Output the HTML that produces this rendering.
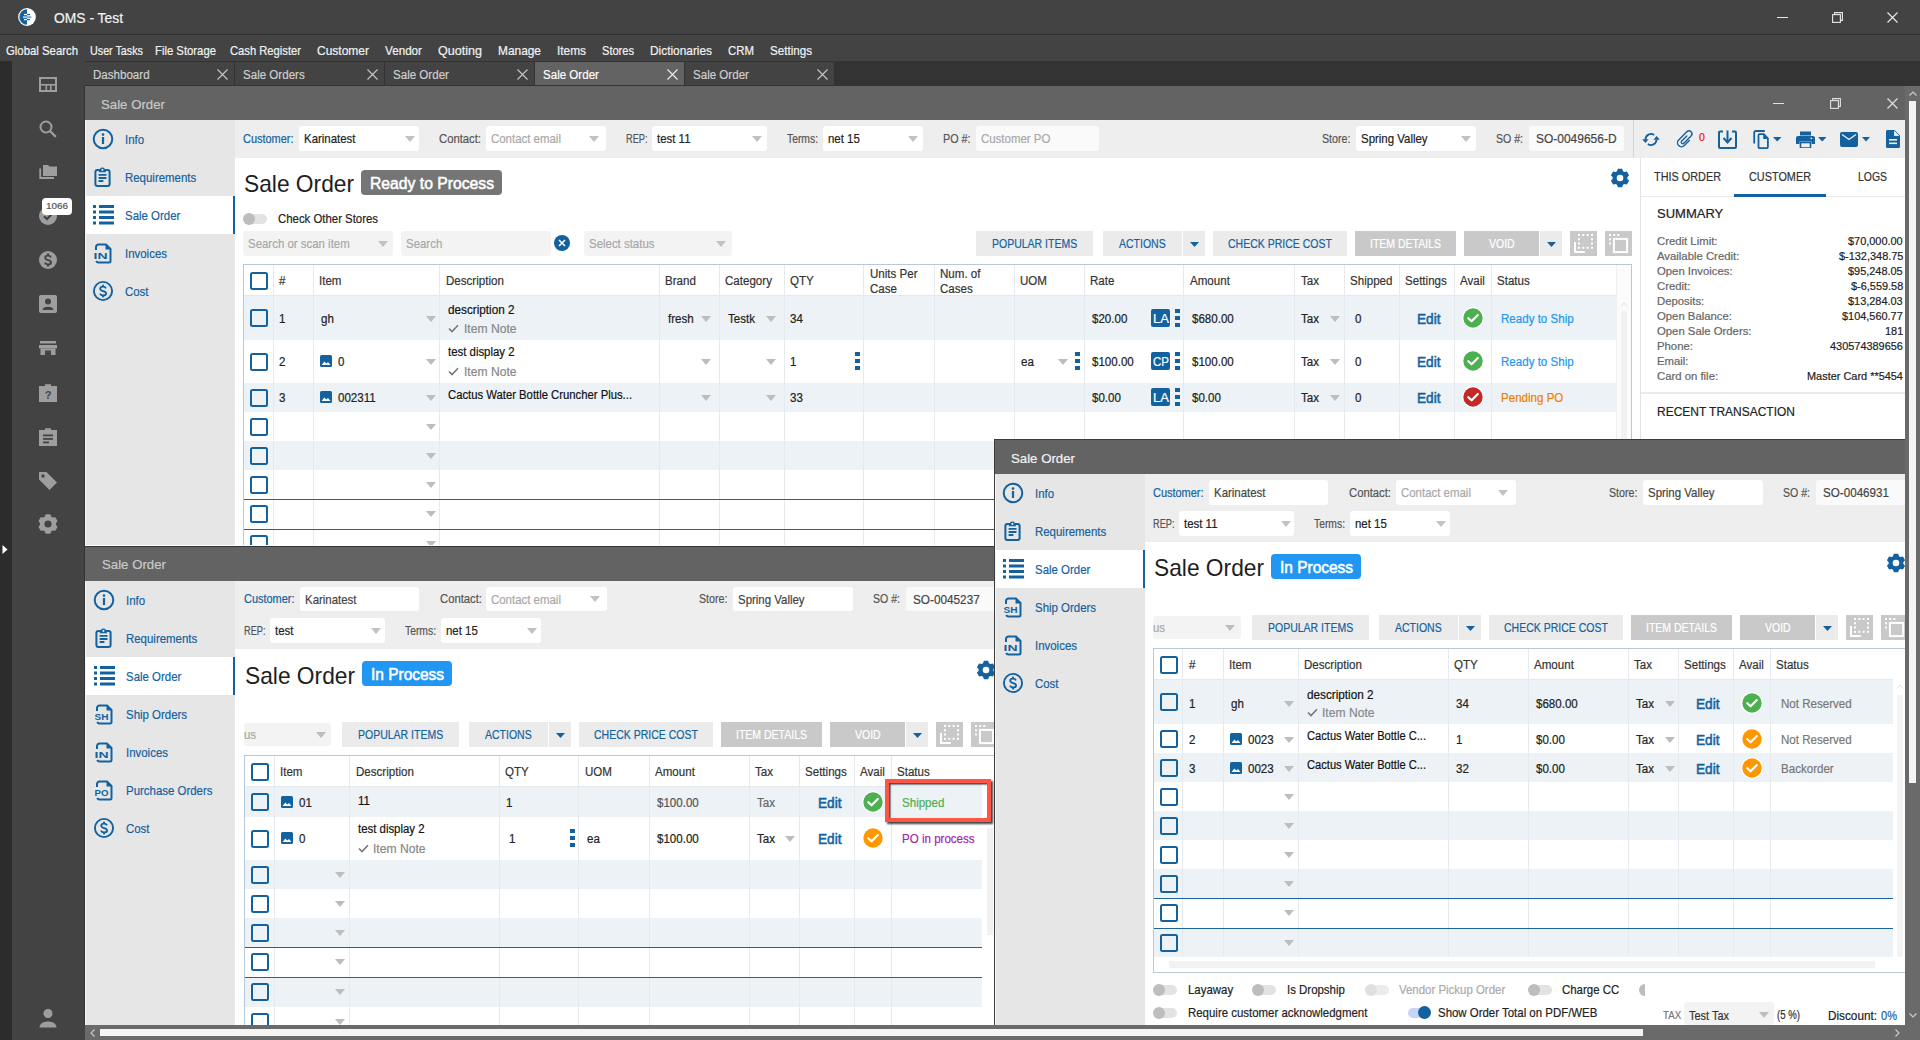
<!DOCTYPE html><html><head><meta charset="utf-8"><style>
html,body{margin:0;padding:0;width:1920px;height:1040px;overflow:hidden;background:#434343;}
body{position:relative;font-family:"Liberation Sans",sans-serif;}
div,svg{position:absolute;box-sizing:border-box;}
.t{white-space:nowrap;line-height:1;transform-origin:0 0;-webkit-text-stroke:0.2px currentColor;}
</style></head><body>
<div style="left:0px;top:0px;width:1920px;height:34px;background:#434343;"></div>
<div style="left:0px;top:34px;width:1920px;height:1px;background:#2f2f2f;"></div>
<div style="left:0px;top:35px;width:1920px;height:26px;background:#434343;"></div>
<svg style="left:18px;top:8px;" width="19" height="19" viewBox="0 0 19 19"><circle cx="9" cy="9" r="8.9" fill="#fff"/><path d="M9 1.3 A7.7 7.7 0 0 0 9 16.7 Z" fill="#13629f"/><rect x="6" y="5.9" width="3" height="1.3" fill="#fff"/><rect x="9" y="5.9" width="3" height="1.3" fill="#13629f"/><rect x="5" y="8.4" width="4" height="1.4" fill="#d5e3ef"/><rect x="9" y="8.4" width="4.3" height="1.4" fill="#5b93c2"/><rect x="6" y="10.9" width="3" height="1.3" fill="#fff"/><rect x="9" y="10.9" width="3" height="1.3" fill="#13629f"/></svg>
<div class="t" style="left:54.0px;top:11.2px;font-size:14px;color:#f2f2f2;transform:scaleX(0.989);">OMS - Test</div>
<div style="left:1777px;top:17px;width:11px;height:1.2px;background:#e8e8e8;"></div>
<svg style="left:1832px;top:12px;" width="11" height="11" viewBox="0 0 11 11"><rect x="0.6" y="2.6" width="7.8" height="7.8" stroke="#e8e8e8" stroke-width="1.1" fill="none"/><path d="M2.6 2.6V0.6H10.4V8.4H8.4" stroke="#e8e8e8" stroke-width="1.1" fill="none"/></svg>
<svg style="left:1887px;top:12px;" width="11" height="11" viewBox="0 0 11 11"><path d="M0.5 0.5L10.5 10.5M10.5 0.5L0.5 10.5" stroke="#e8e8e8" stroke-width="1.2"/></svg>
<div class="t" style="left:6.0px;top:43.8px;font-size:13px;color:#f2f2f2;transform:scaleX(0.874);">Global Search</div>
<div class="t" style="left:90.0px;top:43.8px;font-size:13px;color:#f2f2f2;transform:scaleX(0.827);">User Tasks</div>
<div class="t" style="left:155.0px;top:43.8px;font-size:13px;color:#f2f2f2;transform:scaleX(0.870);">File Storage</div>
<div class="t" style="left:230.0px;top:43.8px;font-size:13px;color:#f2f2f2;transform:scaleX(0.862);">Cash Register</div>
<div class="t" style="left:317.0px;top:43.8px;font-size:13px;color:#f2f2f2;transform:scaleX(0.923);">Customer</div>
<div class="t" style="left:385.0px;top:43.8px;font-size:13px;color:#f2f2f2;transform:scaleX(0.898);">Vendor</div>
<div class="t" style="left:438.0px;top:43.8px;font-size:13px;color:#f2f2f2;transform:scaleX(0.966);">Quoting</div>
<div class="t" style="left:498.0px;top:43.8px;font-size:13px;color:#f2f2f2;transform:scaleX(0.915);">Manage</div>
<div class="t" style="left:557.0px;top:43.8px;font-size:13px;color:#f2f2f2;transform:scaleX(0.912);">Items</div>
<div class="t" style="left:602.0px;top:43.8px;font-size:13px;color:#f2f2f2;transform:scaleX(0.852);">Stores</div>
<div class="t" style="left:650.0px;top:43.8px;font-size:13px;color:#f2f2f2;transform:scaleX(0.913);">Dictionaries</div>
<div class="t" style="left:728.0px;top:43.8px;font-size:13px;color:#f2f2f2;transform:scaleX(0.878);">CRM</div>
<div class="t" style="left:770.0px;top:43.8px;font-size:13px;color:#f2f2f2;transform:scaleX(0.894);">Settings</div>
<div style="left:0px;top:61px;width:12px;height:979px;background:#2c2c2c;"></div>
<div style="left:12px;top:61px;width:73px;height:979px;background:#434343;"></div>
<svg style="left:39px;top:77px;" width="18" height="15" viewBox="0 0 18 15"><rect x="1" y="1" width="16" height="13" stroke="#9e9e9e" stroke-width="2" fill="none"/><rect x="1" y="7" width="16" height="1.6" fill="#9e9e9e"/><rect x="6.5" y="8" width="1.6" height="6" fill="#9e9e9e"/><rect x="11" y="8" width="1.6" height="6" fill="#9e9e9e"/></svg>
<svg style="left:39px;top:120px;" width="18" height="18" viewBox="0 0 18 18"><circle cx="7" cy="7" r="5.5" stroke="#9e9e9e" stroke-width="2" fill="none"/><path d="M11 11 L16.8 16.8" stroke="#9e9e9e" stroke-width="2.4"/></svg>
<svg style="left:39px;top:164px;" width="18" height="15" viewBox="0 0 18 15"><path d="M4 3V1H9L10.5 2.5H18V12H4Z" fill="#9e9e9e"/><path d="M1.2 4.5V14H15" stroke="#9e9e9e" stroke-width="1.8" fill="none"/></svg>
<svg style="left:39px;top:207px;" width="18" height="18" viewBox="0 0 18 18"><circle cx="9" cy="9" r="9" fill="#9e9e9e"/><path d="M5 9.3 L8 12 L13.3 6.5" stroke="#434343" stroke-width="2.2" fill="none"/></svg>
<svg style="left:39px;top:251px;" width="18" height="18" viewBox="0 0 18 18"><circle cx="9" cy="9" r="9" fill="#9e9e9e"/><g transform="translate(-2 -2)"><path d="M14 8.4 C13.4 7.1 12.3 6.6 11 6.6 C9.4 6.6 8.2 7.5 8.2 8.8 C8.2 10.3 9.7 10.7 11 11.1 C12.6 11.6 14.1 12 14.1 13.5 C14.1 14.8 12.8 15.5 11.1 15.5 C9.6 15.5 8.5 14.8 7.9 13.6" stroke="#434343" stroke-width="1.9" fill="none"/><rect x="10.1" y="4.4" width="1.8" height="2.6" fill="#434343"/><rect x="10.1" y="15" width="1.8" height="2.6" fill="#434343"/></g></svg>
<svg style="left:39px;top:295px;" width="18" height="18" viewBox="0 0 18 18"><rect x="0" y="0" width="18" height="18" rx="2" fill="#9e9e9e"/><circle cx="9" cy="6.5" r="3" fill="#434343"/><path d="M3.5 15 C3.5 10.5 14.5 10.5 14.5 15Z" fill="#434343"/></svg>
<svg style="left:39px;top:340px;" width="18" height="16" viewBox="0 0 18 16"><path d="M1 1H17V3.5H1Z" fill="#9e9e9e"/><path d="M0 5H18V8.5H0Z" fill="#9e9e9e"/><path d="M1.5 8.5H16.5V15H12V10.5H6V15H1.5Z" fill="#9e9e9e"/></svg>
<svg style="left:39px;top:383px;" width="18" height="19" viewBox="0 0 18 19"><path d="M0 3H6V1.2H12V3H18V19H0Z" fill="#9e9e9e"/><text x="9" y="16" text-anchor="middle" font-family="Liberation Sans" font-weight="bold" font-size="11" fill="#434343">?</text></svg>
<svg style="left:39px;top:427px;" width="18" height="19" viewBox="0 0 18 19"><path d="M0 3H6V1.2H12V3H18V19H0Z" fill="#9e9e9e"/><rect x="4" y="7.5" width="10" height="1.8" fill="#434343"/><rect x="4" y="11" width="10" height="1.8" fill="#434343"/><rect x="4" y="14.5" width="6" height="1.8" fill="#434343"/></svg>
<svg style="left:38px;top:471px;" width="20" height="20" viewBox="0 0 20 20"><path d="M1 4 V1.5 A0.5 0.5 0 0 1 1.5 1 H8.5 L19 11.5 L11.5 19 L1 8.5Z" fill="#9e9e9e"/><circle cx="5" cy="5" r="1.7" fill="#434343"/></svg>
<svg style="left:38px;top:514px;" width="20" height="20" viewBox="0 0 20 20"><path d="M6.62 2.75 L7.75 0.26 L12.25 0.26 L13.38 2.75 L14.08 2.93 L14.59 3.45 L17.31 3.18 L19.56 7.08 L17.97 9.30 L18.16 10.00 L17.97 10.70 L19.56 12.92 L17.31 16.82 L14.59 16.55 L14.08 17.07 L13.38 17.25 L12.25 19.74 L7.75 19.74 L6.62 17.25 L5.92 17.07 L5.41 16.55 L2.69 16.82 L0.44 12.92 L2.03 10.70 L1.84 10.00 L2.03 9.30 L0.44 7.08 L2.69 3.18 L5.41 3.45 L5.92 2.93Z M13.60 10 A3.6 3.6 0 1 0 6.40 10 A3.6 3.6 0 1 0 13.60 10Z" fill="#9e9e9e" fill-rule="evenodd"/></svg>
<svg style="left:38px;top:1008px;" width="20" height="20" viewBox="0 0 20 20"><circle cx="10" cy="5.5" r="4.5" fill="#9e9e9e"/><path d="M1.5 19.5 C1.5 11.5 18.5 11.5 18.5 19.5Z" fill="#9e9e9e"/></svg>
<div style="left:42px;top:198px;width:30px;height:17px;background:#fff;border-radius:4px;"></div>
<div class="t" style="left:46.0px;top:200.8px;font-size:9.5px;color:#555;transform:scaleX(1.041);">1066</div>
<svg style="left:2px;top:545px;" width="6" height="9" viewBox="0 0 6 9"><path d="M0.5 0 L5.5 4.5 L0.5 9Z" fill="#fff"/></svg>
<div style="left:85px;top:61px;width:1835px;height:25px;background:#333333;"></div>
<div style="left:85px;top:62px;width:149px;height:23px;background:#434343;"></div>
<div class="t" style="left:93.0px;top:69.4px;font-size:12.5px;color:#cfcfcf;transform:scaleX(0.925);">Dashboard</div>
<svg style="left:217px;top:69px;" width="11" height="11" viewBox="0 0 11 11"><path d="M0.5 0.5L10.5 10.5M10.5 0.5L0.5 10.5" stroke="#c8c8c8" stroke-width="1.1"/></svg>
<div style="left:235px;top:62px;width:149px;height:23px;background:#434343;"></div>
<div class="t" style="left:243.0px;top:69.4px;font-size:12.5px;color:#cfcfcf;transform:scaleX(0.925);">Sale Orders</div>
<svg style="left:367px;top:69px;" width="11" height="11" viewBox="0 0 11 11"><path d="M0.5 0.5L10.5 10.5M10.5 0.5L0.5 10.5" stroke="#c8c8c8" stroke-width="1.1"/></svg>
<div style="left:385px;top:62px;width:149px;height:23px;background:#434343;"></div>
<div class="t" style="left:393.0px;top:69.4px;font-size:12.5px;color:#cfcfcf;transform:scaleX(0.925);">Sale Order</div>
<svg style="left:517px;top:69px;" width="11" height="11" viewBox="0 0 11 11"><path d="M0.5 0.5L10.5 10.5M10.5 0.5L0.5 10.5" stroke="#c8c8c8" stroke-width="1.1"/></svg>
<div style="left:535px;top:62px;width:149px;height:23px;background:#636363;"></div>
<div class="t" style="left:543.0px;top:69.4px;font-size:12.5px;color:#ffffff;transform:scaleX(0.925);">Sale Order</div>
<svg style="left:667px;top:69px;" width="11" height="11" viewBox="0 0 11 11"><path d="M0.5 0.5L10.5 10.5M10.5 0.5L0.5 10.5" stroke="#f0f0f0" stroke-width="1.1"/></svg>
<div style="left:685px;top:62px;width:149px;height:23px;background:#434343;"></div>
<div class="t" style="left:693.0px;top:69.4px;font-size:12.5px;color:#cfcfcf;transform:scaleX(0.925);">Sale Order</div>
<svg style="left:817px;top:69px;" width="11" height="11" viewBox="0 0 11 11"><path d="M0.5 0.5L10.5 10.5M10.5 0.5L0.5 10.5" stroke="#c8c8c8" stroke-width="1.1"/></svg>
<div style="left:85px;top:86px;width:1820px;height:34px;background:#636363;"></div>
<div class="t" style="left:101.0px;top:97.7px;font-size:13.5px;color:#c9c9c9;transform:scaleX(0.980);">Sale Order</div>
<div style="left:1773px;top:103px;width:11px;height:1.2px;background:#e0e0e0;"></div>
<svg style="left:1830px;top:98px;" width="11" height="11" viewBox="0 0 11 11"><rect x="0.6" y="2.6" width="7.8" height="7.8" stroke="#e0e0e0" stroke-width="1.1" fill="none"/><path d="M2.6 2.6V0.6H10.4V8.4H8.4" stroke="#e0e0e0" stroke-width="1.1" fill="none"/></svg>
<svg style="left:1887px;top:98px;" width="11" height="11" viewBox="0 0 11 11"><path d="M0.5 0.5L10.5 10.5M10.5 0.5L0.5 10.5" stroke="#e0e0e0" stroke-width="1.2"/></svg>
<div style="left:85px;top:120px;width:150px;height:426px;background:#e6e6e6;"></div>
<svg style="left:92px;top:128px;" width="22" height="22" viewBox="0 0 22 22"><circle cx="11" cy="11" r="9.3" stroke="#13629f" stroke-width="2" fill="none"/><rect x="9.9" y="9" width="2.2" height="7" fill="#13629f"/><circle cx="11" cy="6.6" r="1.3" fill="#13629f"/></svg>
<div class="t" style="left:125.0px;top:132.8px;font-size:13px;color:#13629f;transform:scaleX(0.880);">Info</div>
<svg style="left:93px;top:166px;" width="20" height="22" viewBox="0 0 20 22"><rect x="2.4" y="3.9" width="14.2" height="16" rx="2" stroke="#13629f" stroke-width="2" fill="none"/><path d="M5.6 6.2 L6.9 2.9 A2.9 2.9 0 0 1 11.9 2.9 L13.2 6.2Z" fill="#13629f"/><circle cx="9.4" cy="3.9" r="1.05" fill="#e6e6e6"/><rect x="5.4" y="8" width="8.3" height="1.8" rx="0.9" fill="#13629f"/><rect x="5.4" y="11.1" width="8.3" height="1.8" rx="0.9" fill="#13629f"/><rect x="5.4" y="14.1" width="5.2" height="1.8" rx="0.9" fill="#13629f"/></svg>
<div class="t" style="left:125.0px;top:170.8px;font-size:13px;color:#13629f;transform:scaleX(0.880);">Requirements</div>
<div style="left:85px;top:196px;width:150px;height:38px;background:#ffffff;"></div>
<div style="left:233px;top:196px;width:2px;height:38px;background:#13629f;"></div>
<svg style="left:93px;top:205px;" width="21" height="20" viewBox="0 0 21 20"><rect x="0" y="0" width="3" height="3" fill="#13629f"/><rect x="6" y="0" width="15" height="3" fill="#13629f"/><rect x="0" y="5.5" width="3" height="3" fill="#13629f"/><rect x="6" y="5.5" width="15" height="3" fill="#13629f"/><rect x="0" y="11" width="3" height="3" fill="#13629f"/><rect x="6" y="11" width="15" height="3" fill="#13629f"/><rect x="0" y="16.5" width="3" height="3" fill="#13629f"/><rect x="6" y="16.5" width="15" height="3" fill="#13629f"/></svg>
<div class="t" style="left:125.0px;top:208.8px;font-size:13px;color:#13629f;transform:scaleX(0.880);">Sale Order</div>
<svg style="left:94px;top:243px;" width="19" height="21" viewBox="0 0 19 21"><path d="M2 7V4A2.5 2.5 0 0 1 4.5 1.5H12L16.5 6V18A1.5 1.5 0 0 1 15 19.5H4.5A2.5 2.5 0 0 1 2.2 18" stroke="#13629f" stroke-width="2" fill="none"/><path d="M11.5 1.5V6.5H16.5Z" fill="#13629f"/><text x="-0.5" y="16.2" font-family="Liberation Sans" font-weight="bold" font-size="9.8" fill="#13629f" textLength="14" lengthAdjust="spacingAndGlyphs">IN</text></svg>
<div class="t" style="left:125.0px;top:246.8px;font-size:13px;color:#13629f;transform:scaleX(0.880);">Invoices</div>
<svg style="left:92px;top:280px;" width="22" height="22" viewBox="0 0 22 22"><circle cx="11" cy="11" r="9.1" stroke="#13629f" stroke-width="1.9" fill="none"/><path d="M14 8.4 C13.4 7.1 12.3 6.6 11 6.6 C9.4 6.6 8.2 7.5 8.2 8.8 C8.2 10.3 9.7 10.7 11 11.1 C12.6 11.6 14.1 12 14.1 13.5 C14.1 14.8 12.8 15.5 11.1 15.5 C9.6 15.5 8.5 14.8 7.9 13.6" stroke="#13629f" stroke-width="1.8" fill="none" stroke-linecap="butt"/><rect x="10.1" y="4.6" width="1.8" height="2.4" fill="#13629f"/><rect x="10.1" y="15" width="1.8" height="2.4" fill="#13629f"/></svg>
<div class="t" style="left:125.0px;top:284.8px;font-size:13px;color:#13629f;transform:scaleX(0.880);">Cost</div>
<div style="left:85px;top:120px;width:1px;height:426px;background:#f5f5f5;"></div>
<div style="left:235px;top:120px;width:1670px;height:38px;background:#eeeeee;"></div>
<div style="left:1633px;top:120px;width:1px;height:38px;background:#d6d6d6;"></div>
<div class="t" style="left:243.0px;top:133.4px;font-size:12px;color:#13629f;transform:scaleX(0.912);">Customer:</div>
<div style="left:299px;top:126px;width:120px;height:25px;background:#ffffff;border-radius:3px;"></div>
<div class="t" style="left:304.0px;top:132.1px;font-size:13px;color:#222;transform:scaleX(0.880);">Karinatest</div>
<svg style="left:405px;top:135.5px;" width="10" height="6" viewBox="0 0 10 6"><path d="M0 0H10L5.0 6Z" fill="#c2c2c2"/></svg>
<div class="t" style="left:439.0px;top:133.4px;font-size:12px;color:#555;transform:scaleX(0.940);">Contact:</div>
<div style="left:486px;top:126px;width:120px;height:25px;background:#ffffff;border-radius:3px;"></div>
<div class="t" style="left:491.0px;top:132.1px;font-size:13px;color:#a8a8a8;transform:scaleX(0.880);">Contact email</div>
<svg style="left:589px;top:135.5px;" width="10" height="6" viewBox="0 0 10 6"><path d="M0 0H10L5.0 6Z" fill="#c2c2c2"/></svg>
<div class="t" style="left:626.0px;top:133.4px;font-size:12px;color:#555;transform:scaleX(0.768);">REP:</div>
<div style="left:652px;top:126px;width:115px;height:25px;background:#ffffff;border-radius:3px;"></div>
<div class="t" style="left:657.0px;top:132.1px;font-size:13px;color:#222;transform:scaleX(0.880);">test 11</div>
<svg style="left:752px;top:135.5px;" width="10" height="6" viewBox="0 0 10 6"><path d="M0 0H10L5.0 6Z" fill="#c2c2c2"/></svg>
<div class="t" style="left:787.0px;top:133.4px;font-size:12px;color:#555;transform:scaleX(0.861);">Terms:</div>
<div style="left:823px;top:126px;width:100px;height:25px;background:#ffffff;border-radius:3px;"></div>
<div class="t" style="left:828.0px;top:132.1px;font-size:13px;color:#222;transform:scaleX(0.880);">net 15</div>
<svg style="left:908px;top:135.5px;" width="10" height="6" viewBox="0 0 10 6"><path d="M0 0H10L5.0 6Z" fill="#c2c2c2"/></svg>
<div class="t" style="left:943.0px;top:133.4px;font-size:12px;color:#555;transform:scaleX(0.896);">PO #:</div>
<div style="left:976px;top:126px;width:123px;height:25px;background:#fafafa;border-radius:3px;"></div>
<div class="t" style="left:981.0px;top:132.1px;font-size:13px;color:#a8a8a8;transform:scaleX(0.880);">Customer PO</div>
<div class="t" style="left:1322.0px;top:133.4px;font-size:12px;color:#555;transform:scaleX(0.890);">Store:</div>
<div style="left:1356px;top:126px;width:120px;height:25px;background:#ffffff;border-radius:3px;"></div>
<div class="t" style="left:1361.0px;top:132.1px;font-size:13px;color:#222;transform:scaleX(0.880);">Spring Valley</div>
<svg style="left:1461px;top:135.5px;" width="10" height="6" viewBox="0 0 10 6"><path d="M0 0H10L5.0 6Z" fill="#c2c2c2"/></svg>
<div class="t" style="left:1496.0px;top:133.4px;font-size:12px;color:#555;transform:scaleX(0.880);">SO #:</div>
<div style="left:1529px;top:126px;width:95px;height:25px;background:#fafafa;border-radius:3px;"></div>
<div class="t" style="left:1536.0px;top:132.1px;font-size:13px;color:#444;transform:scaleX(0.921);">SO-0049656-D</div>
<svg style="left:1640px;top:130px;" width="22" height="18" viewBox="0 0 22 18"><path d="M14.15 5.0 A5.5 5.5 0 0 0 5.5 9.5" stroke="#13629f" stroke-width="1.8" fill="none"/><path d="M2.2 9.2 L8.6 9.2 L5.4 13 Z" fill="#13629f"/><path d="M7.85 14.0 A5.5 5.5 0 0 0 16.5 9.5" stroke="#13629f" stroke-width="1.8" fill="none"/><path d="M13.4 9.8 L19.8 9.8 L16.6 6.0 Z" fill="#13629f"/></svg>
<svg style="left:1675px;top:128px;" width="20" height="22" viewBox="0 0 20 22"><g transform="translate(10.2 11.0) rotate(45) translate(-4 -9.25)"><path d="M8 7.5 L8 14.5 A4 4 0 0 1 0 14.5 L0 3 A3 3 0 0 1 6 3 L6 13.2 A1.5 1.5 0 0 1 3 13.2 L3 6" stroke="#13629f" stroke-width="1.4" fill="none" stroke-linecap="round"/></g></svg>
<div class="t" style="left:1699.0px;top:131.6px;font-size:10.5px;color:#f01010;">0</div>
<svg style="left:1718px;top:130px;" width="19" height="19" viewBox="0 0 19 19"><path d="M5 1.5H2A1 1 0 0 0 1 2.5V17A1 1 0 0 0 2 18H17A1 1 0 0 0 18 17V2.5A1 1 0 0 0 17 1.5H14" stroke="#13629f" stroke-width="2" fill="none"/><path d="M9.5 0.5V11" stroke="#13629f" stroke-width="2"/><path d="M5.5 8 L9.5 12.5 L13.5 8" stroke="#13629f" stroke-width="2" fill="none"/></svg>
<svg style="left:1753px;top:130px;" width="16" height="19" viewBox="0 0 16 19"><path d="M1.2 13.5V2.6A1.6 1.6 0 0 1 2.8 1H11.8" stroke="#13629f" stroke-width="1.8" fill="none"/><path d="M5.5 5.2A1 1 0 0 1 6.5 4.2H10.8L14.9 8.3V17A1.2 1.2 0 0 1 13.7 18.2H6.7A1.2 1.2 0 0 1 5.5 17Z" stroke="#13629f" stroke-width="1.8" fill="none"/><path d="M10.2 4.5V9H14.6Z" fill="#13629f"/></svg>
<svg style="left:1773px;top:137px;" width="8.5" height="4.5" viewBox="0 0 8.5 4.5"><path d="M0 0H8.5L4.25 4.5Z" fill="#13629f"/></svg>
<svg style="left:1796px;top:131px;" width="19" height="17" viewBox="0 0 19 17"><rect x="4" y="0.5" width="11" height="4" fill="#13629f"/><path d="M0 7A2 2 0 0 1 2 5H17A2 2 0 0 1 19 7V13H15.5V10.5H3.5V13H0Z" fill="#13629f"/><rect x="4.5" y="11.5" width="10" height="5.5" stroke="#13629f" stroke-width="1.6" fill="#eee"/><circle cx="15.3" cy="7.3" r="0.9" fill="#eee"/></svg>
<svg style="left:1817.5px;top:137px;" width="8.5" height="4.5" viewBox="0 0 8.5 4.5"><path d="M0 0H8.5L4.25 4.5Z" fill="#13629f"/></svg>
<svg style="left:1840px;top:132px;" width="18" height="15" viewBox="0 0 18 15"><rect x="0" y="0" width="18" height="15" rx="2" fill="#13629f"/><path d="M2 2.5 L9 7.5 L16 2.5" stroke="#eeeeee" stroke-width="1.4" fill="none"/></svg>
<svg style="left:1862px;top:137px;" width="8" height="4.5" viewBox="0 0 8 4.5"><path d="M0 0H8L4.0 4.5Z" fill="#13629f"/></svg>
<svg style="left:1886px;top:130px;" width="14" height="18" viewBox="0 0 14 18"><path d="M1.5 0H8.5L14 5.5V16.5A1.5 1.5 0 0 1 12.5 18H1.5A1.5 1.5 0 0 1 0 16.5V1.5A1.5 1.5 0 0 1 1.5 0Z" fill="#13629f"/><path d="M8 1 V5.8 H13" fill="#eee"/><path d="M8.3 0.8 L13.2 5.7 H8.3Z" fill="#eeeeee"/><rect x="3" y="9" width="8" height="1.6" fill="#eee"/><rect x="3" y="12.5" width="8" height="1.6" fill="#eee"/></svg>
<div style="left:235px;top:158px;width:1405px;height:388px;background:#ffffff;"></div>
<div class="t" style="left:244.0px;top:171.9px;font-size:24px;color:#1e1e1e;transform:scaleX(0.948);-webkit-text-stroke:0;">Sale Order</div>
<div style="left:361px;top:170px;width:141px;height:25px;background:#757575;border-radius:4px;"></div>
<div class="t" style="left:369.5px;top:175.6px;font-size:16px;color:#ffffff;transform:scaleX(0.982);-webkit-text-stroke:0.55px currentColor;">Ready to Process</div>
<svg style="left:1610px;top:168px;" width="20" height="20" viewBox="0 0 20 20"><path d="M6.91 3.38 L7.86 0.74 L12.14 0.74 L13.09 3.38 L13.72 3.55 L14.19 4.02 L16.95 3.52 L19.08 7.22 L17.27 9.36 L17.45 10.00 L17.27 10.64 L19.08 12.78 L16.95 16.48 L14.19 15.98 L13.72 16.45 L13.09 16.62 L12.14 19.26 L7.86 19.26 L6.91 16.62 L6.28 16.45 L5.81 15.98 L3.05 16.48 L0.92 12.78 L2.73 10.64 L2.55 10.00 L2.73 9.36 L0.92 7.22 L3.05 3.52 L5.81 4.02 L6.28 3.55Z M13.30 10.0 A3.3000000000000003 3.3000000000000003 0 1 0 6.70 10.0 A3.3000000000000003 3.3000000000000003 0 1 0 13.30 10.0Z" fill="#13629f" fill-rule="evenodd"/></svg>
<div style="left:245px;top:213.5px;width:22px;height:10px;background:#e3e3e3;border-radius:5px;"></div>
<div style="left:243px;top:212.5px;width:12px;height:12px;border-radius:50%;background:#bdbdbd;"></div>
<div class="t" style="left:277.5px;top:212.3px;font-size:13px;color:#222;transform:scaleX(0.876);">Check Other Stores</div>
<div style="left:243px;top:231px;width:150px;height:25px;background:#f3f3f3;border-radius:3px;"></div>
<div class="t" style="left:248.0px;top:237.1px;font-size:13px;color:#a8a8a8;transform:scaleX(0.880);">Search or scan item</div>
<svg style="left:378px;top:240.5px;" width="10" height="6" viewBox="0 0 10 6"><path d="M0 0H10L5.0 6Z" fill="#c2c2c2"/></svg>
<div style="left:401px;top:231px;width:150px;height:25px;background:#f3f3f3;border-radius:3px;"></div>
<div class="t" style="left:406.0px;top:237.1px;font-size:13px;color:#a8a8a8;transform:scaleX(0.880);">Search</div>
<svg style="left:554px;top:235px;" width="16" height="16" viewBox="0 0 16 16"><circle cx="8" cy="8" r="8" fill="#13629f"/><path d="M5 5L11 11M11 5L5 11" stroke="#fff" stroke-width="1.6"/></svg>
<div style="left:584px;top:231px;width:148px;height:25px;background:#f3f3f3;border-radius:3px;"></div>
<div class="t" style="left:589.0px;top:237.1px;font-size:13px;color:#a8a8a8;transform:scaleX(0.880);">Select status</div>
<svg style="left:716px;top:240.5px;" width="10" height="6" viewBox="0 0 10 6"><path d="M0 0H10L5.0 6Z" fill="#c2c2c2"/></svg>
<div style="left:976px;top:231px;width:117px;height:25px;background:#ebebeb;"></div>
<div class="t" style="left:991.9px;top:237.9px;font-size:12.5px;color:#13629f;transform:scaleX(0.840);">POPULAR ITEMS</div>
<div style="left:1103px;top:231px;width:79px;height:25px;background:#ebebeb;"></div>
<div class="t" style="left:1119.2px;top:237.9px;font-size:12.5px;color:#13629f;transform:scaleX(0.840);">ACTIONS</div>
<div style="left:1183px;top:231px;width:22px;height:25px;background:#ebebeb;"></div>
<svg style="left:1189.5px;top:241.5px;" width="9" height="5" viewBox="0 0 9 5"><path d="M0 0H9L4.5 5Z" fill="#13629f"/></svg>
<div style="left:1213px;top:231px;width:134px;height:25px;background:#ebebeb;"></div>
<div class="t" style="left:1228.1px;top:237.9px;font-size:12.5px;color:#13629f;transform:scaleX(0.840);">CHECK PRICE COST</div>
<div style="left:1355px;top:231px;width:101px;height:25px;background:#c9c9c9;"></div>
<div class="t" style="left:1370.0px;top:237.9px;font-size:12.5px;color:#ffffff;transform:scaleX(0.840);">ITEM DETAILS</div>
<div style="left:1464px;top:231px;width:75px;height:25px;background:#c9c9c9;"></div>
<div class="t" style="left:1488.7px;top:237.9px;font-size:12.5px;color:#ffffff;transform:scaleX(0.840);">VOID</div>
<div style="left:1540px;top:231px;width:22px;height:25px;background:#ebebeb;"></div>
<svg style="left:1546.5px;top:241.5px;" width="9" height="5" viewBox="0 0 9 5"><path d="M0 0H9L4.5 5Z" fill="#13629f"/></svg>
<div style="left:1570px;top:231px;width:27px;height:25px;background:#c9c9c9;"></div>
<div style="left:1605px;top:231px;width:27px;height:25px;background:#c9c9c9;"></div>
<svg style="left:1570px;top:231px;" width="27" height="25" viewBox="0 0 27 25"><rect x="8" y="3" width="2" height="2" fill="#fff"/><rect x="8" y="15.8" width="2" height="2" fill="#fff"/><rect x="12.3" y="3" width="2" height="2" fill="#fff"/><rect x="12.3" y="15.8" width="2" height="2" fill="#fff"/><rect x="16.6" y="3" width="2" height="2" fill="#fff"/><rect x="16.6" y="15.8" width="2" height="2" fill="#fff"/><rect x="21" y="3" width="2" height="2" fill="#fff"/><rect x="21" y="15.8" width="2" height="2" fill="#fff"/><rect x="8" y="7.3" width="2" height="2" fill="#fff"/><rect x="21" y="7.3" width="2" height="2" fill="#fff"/><rect x="8" y="11.5" width="2" height="2" fill="#fff"/><rect x="21" y="11.5" width="2" height="2" fill="#fff"/><rect x="4" y="11" width="2" height="11" fill="#fff"/><rect x="4" y="20" width="10.8" height="2" fill="#fff"/></svg>
<svg style="left:1605px;top:231px;" width="27" height="25" viewBox="0 0 27 25"><rect x="4" y="3" width="2" height="2" fill="#fff"/><rect x="8.2" y="3" width="2" height="2" fill="#fff"/><rect x="12.3" y="3" width="2" height="2" fill="#fff"/><rect x="4" y="7.3" width="2" height="2" fill="#fff"/><rect x="4" y="11.5" width="2" height="2" fill="#fff"/><rect x="8.9" y="7.9" width="13.2" height="13.2" stroke="#fff" stroke-width="2" fill="none"/></svg>
<div style="left:1640px;top:158px;width:265px;height:388px;background:#ffffff;"></div>
<div style="left:1640px;top:158px;width:1px;height:388px;background:#e3e3e3;"></div>
<div class="t" style="left:1654.0px;top:170.3px;font-size:13px;color:#333;transform:scaleX(0.836);">THIS ORDER</div>
<div class="t" style="left:1749.0px;top:170.3px;font-size:13px;color:#333;transform:scaleX(0.836);">CUSTOMER</div>
<div class="t" style="left:1858.0px;top:170.3px;font-size:13px;color:#333;transform:scaleX(0.803);">LOGS</div>
<div style="left:1641px;top:196px;width:264px;height:1px;background:#e8e8e8;"></div>
<div style="left:1734px;top:194px;width:92px;height:2.5px;background:#13629f;"></div>
<div class="t" style="left:1657.0px;top:207.3px;font-size:13px;color:#222;">SUMMARY</div>
<div class="t" style="left:1657.0px;top:236.1px;font-size:11px;color:#666;transform:scaleX(1.030);">Credit Limit:</div>
<div class="t" style="left:1848.3px;top:236.0px;font-size:11.5px;color:#222;transform:scaleX(0.950);">$70,000.00</div>
<div class="t" style="left:1657.0px;top:251.1px;font-size:11px;color:#666;transform:scaleX(1.030);">Available Credit:</div>
<div class="t" style="left:1838.6px;top:251.0px;font-size:11.5px;color:#222;transform:scaleX(0.950);">$-132,348.75</div>
<div class="t" style="left:1657.0px;top:266.1px;font-size:11px;color:#666;transform:scaleX(1.030);">Open Invoices:</div>
<div class="t" style="left:1848.3px;top:266.0px;font-size:11.5px;color:#222;transform:scaleX(0.950);">$95,248.05</div>
<div class="t" style="left:1657.0px;top:281.1px;font-size:11px;color:#666;transform:scaleX(1.030);">Credit:</div>
<div class="t" style="left:1850.8px;top:281.0px;font-size:11.5px;color:#222;transform:scaleX(0.950);">$-6,559.58</div>
<div class="t" style="left:1657.0px;top:296.1px;font-size:11px;color:#666;transform:scaleX(1.030);">Deposits:</div>
<div class="t" style="left:1848.3px;top:296.0px;font-size:11.5px;color:#222;transform:scaleX(0.950);">$13,284.03</div>
<div class="t" style="left:1657.0px;top:311.1px;font-size:11px;color:#666;transform:scaleX(1.030);">Open Balance:</div>
<div class="t" style="left:1842.2px;top:311.0px;font-size:11.5px;color:#222;transform:scaleX(0.950);">$104,560.77</div>
<div class="t" style="left:1657.0px;top:326.1px;font-size:11px;color:#666;transform:scaleX(1.030);">Open Sale Orders:</div>
<div class="t" style="left:1884.8px;top:326.0px;font-size:11.5px;color:#222;transform:scaleX(0.950);">181</div>
<div class="t" style="left:1657.0px;top:341.1px;font-size:11px;color:#666;transform:scaleX(1.030);">Phone:</div>
<div class="t" style="left:1830.1px;top:341.0px;font-size:11.5px;color:#222;transform:scaleX(0.950);">430574389656</div>
<div class="t" style="left:1657.0px;top:356.1px;font-size:11px;color:#666;transform:scaleX(1.030);">Email:</div>
<div class="t" style="left:1657.0px;top:371.1px;font-size:11px;color:#666;transform:scaleX(1.030);">Card on file:</div>
<div class="t" style="left:1807.1px;top:371.0px;font-size:11.5px;color:#222;transform:scaleX(0.950);">Master Card **5454</div>
<div style="left:1641px;top:392px;width:264px;height:2px;background:#ebebeb;"></div>
<div class="t" style="left:1657.0px;top:405.3px;font-size:13px;color:#222;transform:scaleX(0.921);">RECENT TRANSACTION</div>
<div style="left:243px;top:264px;width:1389px;height:282px;background:#ffffff;"></div>
<div style="left:243px;top:295px;width:1373px;height:45px;background:#ecf2f6;"></div>
<div style="left:243px;top:383px;width:1373px;height:29px;background:#ecf2f6;"></div>
<div style="left:243px;top:441px;width:1373px;height:29px;background:#ecf2f6;"></div>
<div style="left:243px;top:559px;width:1373px;height:30px;background:#ecf2f6;"></div>
<div style="left:243px;top:295px;width:1373px;height:1px;background:#e6e9ec;"></div>
<div style="left:272.7px;top:264px;width:1.0px;height:282px;background:#e6eaee;"></div>
<div style="left:313px;top:264px;width:1px;height:282px;background:#e6eaee;"></div>
<div style="left:439.3px;top:264px;width:1.0px;height:282px;background:#e6eaee;"></div>
<div style="left:658.6px;top:264px;width:1.0px;height:282px;background:#e6eaee;"></div>
<div style="left:718.5px;top:264px;width:1.0px;height:282px;background:#e6eaee;"></div>
<div style="left:783.9px;top:264px;width:1.0px;height:282px;background:#e6eaee;"></div>
<div style="left:863.4px;top:264px;width:1.0px;height:282px;background:#e6eaee;"></div>
<div style="left:933.6px;top:264px;width:1.0px;height:282px;background:#e6eaee;"></div>
<div style="left:1013.8px;top:264px;width:1.0px;height:282px;background:#e6eaee;"></div>
<div style="left:1083.6px;top:264px;width:1.0px;height:282px;background:#e6eaee;"></div>
<div style="left:1183.4px;top:264px;width:1.0px;height:282px;background:#e6eaee;"></div>
<div style="left:1293.8px;top:264px;width:1.0px;height:282px;background:#e6eaee;"></div>
<div style="left:1344.2px;top:264px;width:1.0px;height:282px;background:#e6eaee;"></div>
<div style="left:1398.9px;top:264px;width:1.0px;height:282px;background:#e6eaee;"></div>
<div style="left:1454.4px;top:264px;width:1.0px;height:282px;background:#e6eaee;"></div>
<div style="left:1491px;top:264px;width:1px;height:282px;background:#e6eaee;"></div>
<div style="left:243px;top:499px;width:1373px;height:1.3000000000000114px;background:#1d63a0;"></div>
<div style="left:243px;top:529px;width:1373px;height:1.2999999999999545px;background:#1d63a0;"></div>
<div style="left:243px;top:264px;width:1389px;height:1px;background:#b7c8d8;"></div>
<div style="left:243px;top:264px;width:1px;height:282px;background:#b7c8d8;"></div>
<div class="t" style="left:279.0px;top:275.4px;font-size:12.5px;color:#333;transform:scaleX(0.925);">#</div>
<div class="t" style="left:319.0px;top:275.4px;font-size:12.5px;color:#333;transform:scaleX(0.925);">Item</div>
<div class="t" style="left:446.0px;top:275.4px;font-size:12.5px;color:#333;transform:scaleX(0.925);">Description</div>
<div class="t" style="left:665.0px;top:275.4px;font-size:12.5px;color:#333;transform:scaleX(0.925);">Brand</div>
<div class="t" style="left:725.0px;top:275.4px;font-size:12.5px;color:#333;transform:scaleX(0.925);">Category</div>
<div class="t" style="left:790.0px;top:275.4px;font-size:12.5px;color:#333;transform:scaleX(0.925);">QTY</div>
<div class="t" style="left:870.0px;top:268.4px;font-size:12.5px;color:#333;transform:scaleX(0.925);">Units Per</div>
<div class="t" style="left:870.0px;top:283.4px;font-size:12.5px;color:#333;transform:scaleX(0.925);">Case</div>
<div class="t" style="left:940.0px;top:268.4px;font-size:12.5px;color:#333;transform:scaleX(0.925);">Num. of</div>
<div class="t" style="left:940.0px;top:283.4px;font-size:12.5px;color:#333;transform:scaleX(0.925);">Cases</div>
<div class="t" style="left:1020.0px;top:275.4px;font-size:12.5px;color:#333;transform:scaleX(0.925);">UOM</div>
<div class="t" style="left:1090.0px;top:275.4px;font-size:12.5px;color:#333;transform:scaleX(0.925);">Rate</div>
<div class="t" style="left:1190.0px;top:275.4px;font-size:12.5px;color:#333;transform:scaleX(0.925);">Amount</div>
<div class="t" style="left:1301.0px;top:275.4px;font-size:12.5px;color:#333;transform:scaleX(0.925);">Tax</div>
<div class="t" style="left:1350.0px;top:275.4px;font-size:12.5px;color:#333;transform:scaleX(0.925);">Shipped</div>
<div class="t" style="left:1405.0px;top:275.4px;font-size:12.5px;color:#333;transform:scaleX(0.925);">Settings</div>
<div class="t" style="left:1460.0px;top:275.4px;font-size:12.5px;color:#333;transform:scaleX(0.925);">Avail</div>
<div class="t" style="left:1497.0px;top:275.4px;font-size:12.5px;color:#333;transform:scaleX(0.925);">Status</div>
<div style="left:1616px;top:265px;width:15px;height:281px;background:#fbfbfb;"></div>
<div style="left:1616px;top:265px;width:1px;height:281px;background:#efefef;"></div>
<div style="left:1621px;top:311px;width:6px;height:235px;background:#f1f1f1;"></div>
<div style="left:1631px;top:264px;width:1px;height:282px;background:#b7c8d8;"></div>
<svg style="left:1620px;top:302px;" width="8" height="5" viewBox="0 0 8 5"><path d="M0.5 4.5L4 1L7.5 4.5" stroke="#e0e0e0" stroke-width="1" fill="none"/></svg>
<div style="left:250px;top:308.5px;width:18px;height:18px;border:2px solid #13629f;border-radius:2.5px;"></div>
<div style="left:250px;top:352.5px;width:18px;height:18px;border:2px solid #13629f;border-radius:2.5px;"></div>
<div style="left:250px;top:388.5px;width:18px;height:18px;border:2px solid #13629f;border-radius:2.5px;"></div>
<div style="left:250px;top:417.5px;width:18px;height:18px;border:2px solid #13629f;border-radius:2.5px;"></div>
<div style="left:250px;top:446.5px;width:18px;height:18px;border:2px solid #13629f;border-radius:2.5px;"></div>
<div style="left:250px;top:475.5px;width:18px;height:18px;border:2px solid #13629f;border-radius:2.5px;"></div>
<div style="left:250px;top:505.0px;width:18px;height:18px;border:2px solid #13629f;border-radius:2.5px;"></div>
<div style="left:250px;top:535.0px;width:18px;height:18px;border:2px solid #13629f;border-radius:2.5px;"></div>
<div style="left:250px;top:565.0px;width:18px;height:18px;border:2px solid #13629f;border-radius:2.5px;"></div>
<div style="left:250px;top:272px;width:18px;height:18px;border:2px solid #13629f;border-radius:2.5px;"></div>
<div class="t" style="left:279.0px;top:312.9px;font-size:12.5px;color:#222;transform:scaleX(0.925);">1</div>
<div class="t" style="left:321.0px;top:312.9px;font-size:12.5px;color:#222;transform:scaleX(0.925);">gh</div>
<svg style="left:426px;top:315.5px;" width="10" height="6" viewBox="0 0 10 6"><path d="M0 0H10L5.0 6Z" fill="#bdbdbd"/></svg>
<div class="t" style="left:448.0px;top:303.9px;font-size:12.5px;color:#111;transform:scaleX(0.938);">description 2</div>
<svg style="left:448px;top:323.5px;" width="11" height="9" viewBox="0 0 11 9"><path d="M1 4.5 L4 7.5 L10 1.2" stroke="#777" stroke-width="1.6" fill="none"/></svg>
<div class="t" style="left:464.0px;top:323.4px;font-size:12.5px;color:#888;transform:scaleX(0.969);">Item Note</div>
<div class="t" style="left:668.0px;top:312.9px;font-size:12.5px;color:#222;transform:scaleX(0.925);">fresh</div>
<svg style="left:701px;top:315.5px;" width="10" height="6" viewBox="0 0 10 6"><path d="M0 0H10L5.0 6Z" fill="#bdbdbd"/></svg>
<div class="t" style="left:728.0px;top:312.9px;font-size:12.5px;color:#222;transform:scaleX(0.925);">Testk</div>
<svg style="left:766px;top:315.5px;" width="10" height="6" viewBox="0 0 10 6"><path d="M0 0H10L5.0 6Z" fill="#bdbdbd"/></svg>
<div class="t" style="left:790.0px;top:312.9px;font-size:12.5px;color:#222;transform:scaleX(0.925);">34</div>
<div class="t" style="left:1092.0px;top:312.9px;font-size:12.5px;color:#222;transform:scaleX(0.925);">$20.00</div>
<div style="left:1151px;top:309px;width:19px;height:18px;background:#13629f;border-radius:2px;"></div>
<div class="t" style="left:1152.5px;top:312.9px;font-size:12.5px;color:#fff;transform:scaleX(1.046);">LA</div>
<div style="left:1175px;top:309px;width:5px;height:4px;background:#13629f;"></div>
<div style="left:1175px;top:316px;width:5px;height:4px;background:#13629f;"></div>
<div style="left:1175px;top:323px;width:5px;height:4px;background:#13629f;"></div>
<div class="t" style="left:1191.5px;top:312.9px;font-size:12.5px;color:#222;transform:scaleX(0.925);">$680.00</div>
<div class="t" style="left:1301.0px;top:312.9px;font-size:12.5px;color:#222;transform:scaleX(0.925);">Tax</div>
<svg style="left:1330px;top:315.5px;" width="10" height="6" viewBox="0 0 10 6"><path d="M0 0H10L5.0 6Z" fill="#bdbdbd"/></svg>
<div class="t" style="left:1355.0px;top:312.9px;font-size:12.5px;color:#222;transform:scaleX(0.925);">0</div>
<div class="t" style="left:1417.0px;top:310.6px;font-size:15px;color:#13629f;transform:scaleX(0.909);-webkit-text-stroke:0.55px currentColor;">Edit</div>
<svg style="left:1462px;top:306.5px;" width="22" height="22" viewBox="0 0 22 22"><circle cx="11" cy="11" r="10.8" fill="#fff"/><circle cx="11" cy="11" r="9.7" fill="#4caf50"/><path d="M6.3 11.2 L9.6 14.3 L15.8 8" stroke="#fff" stroke-width="2.2" fill="none" stroke-linecap="round" stroke-linejoin="round"/></svg>
<div class="t" style="left:1501.0px;top:312.9px;font-size:12.5px;color:#2196f3;transform:scaleX(0.925);">Ready to Ship</div>
<div class="t" style="left:279.0px;top:355.9px;font-size:12.5px;color:#222;transform:scaleX(0.925);">2</div>
<svg style="left:319.5px;top:354.5px;" width="12" height="12" viewBox="0 0 12 12"><rect width="12" height="12" rx="1.5" fill="#13629f"/><path d="M1.6 10 L4.3 6.4 L6.3 8.4 L8 6.9 L10.5 10Z" fill="#fff"/></svg>
<div class="t" style="left:338.0px;top:355.9px;font-size:12.5px;color:#222;transform:scaleX(0.925);">0</div>
<svg style="left:426px;top:358.5px;" width="10" height="6" viewBox="0 0 10 6"><path d="M0 0H10L5.0 6Z" fill="#bdbdbd"/></svg>
<div class="t" style="left:448.0px;top:346.4px;font-size:12.5px;color:#111;transform:scaleX(0.912);">test display 2</div>
<svg style="left:448px;top:366.5px;" width="11" height="9" viewBox="0 0 11 9"><path d="M1 4.5 L4 7.5 L10 1.2" stroke="#777" stroke-width="1.6" fill="none"/></svg>
<div class="t" style="left:464.0px;top:366.4px;font-size:12.5px;color:#888;transform:scaleX(0.969);">Item Note</div>
<svg style="left:701px;top:358.5px;" width="10" height="6" viewBox="0 0 10 6"><path d="M0 0H10L5.0 6Z" fill="#bdbdbd"/></svg>
<svg style="left:766px;top:358.5px;" width="10" height="6" viewBox="0 0 10 6"><path d="M0 0H10L5.0 6Z" fill="#bdbdbd"/></svg>
<div class="t" style="left:790.0px;top:355.9px;font-size:12.5px;color:#222;transform:scaleX(0.925);">1</div>
<div style="left:855px;top:352px;width:5px;height:4px;background:#13629f;"></div>
<div style="left:855px;top:359px;width:5px;height:4px;background:#13629f;"></div>
<div style="left:855px;top:366px;width:5px;height:4px;background:#13629f;"></div>
<div class="t" style="left:1021.0px;top:355.9px;font-size:12.5px;color:#222;transform:scaleX(0.925);">ea</div>
<svg style="left:1058px;top:358.5px;" width="10" height="6" viewBox="0 0 10 6"><path d="M0 0H10L5.0 6Z" fill="#bdbdbd"/></svg>
<div style="left:1075px;top:352px;width:5px;height:4px;background:#13629f;"></div>
<div style="left:1075px;top:359px;width:5px;height:4px;background:#13629f;"></div>
<div style="left:1075px;top:366px;width:5px;height:4px;background:#13629f;"></div>
<div class="t" style="left:1092.0px;top:355.9px;font-size:12.5px;color:#222;transform:scaleX(0.925);">$100.00</div>
<div style="left:1151px;top:352px;width:19px;height:18px;background:#13629f;border-radius:2px;"></div>
<div class="t" style="left:1152.5px;top:355.9px;font-size:12.5px;color:#fff;transform:scaleX(0.921);">CP</div>
<div style="left:1175px;top:352px;width:5px;height:4px;background:#13629f;"></div>
<div style="left:1175px;top:359px;width:5px;height:4px;background:#13629f;"></div>
<div style="left:1175px;top:366px;width:5px;height:4px;background:#13629f;"></div>
<div class="t" style="left:1191.5px;top:355.9px;font-size:12.5px;color:#222;transform:scaleX(0.925);">$100.00</div>
<div class="t" style="left:1301.0px;top:355.9px;font-size:12.5px;color:#222;transform:scaleX(0.925);">Tax</div>
<svg style="left:1330px;top:358.5px;" width="10" height="6" viewBox="0 0 10 6"><path d="M0 0H10L5.0 6Z" fill="#bdbdbd"/></svg>
<div class="t" style="left:1355.0px;top:355.9px;font-size:12.5px;color:#222;transform:scaleX(0.925);">0</div>
<div class="t" style="left:1417.0px;top:353.6px;font-size:15px;color:#13629f;transform:scaleX(0.909);-webkit-text-stroke:0.55px currentColor;">Edit</div>
<svg style="left:1462px;top:349.5px;" width="22" height="22" viewBox="0 0 22 22"><circle cx="11" cy="11" r="10.8" fill="#fff"/><circle cx="11" cy="11" r="9.7" fill="#4caf50"/><path d="M6.3 11.2 L9.6 14.3 L15.8 8" stroke="#fff" stroke-width="2.2" fill="none" stroke-linecap="round" stroke-linejoin="round"/></svg>
<div class="t" style="left:1501.0px;top:355.9px;font-size:12.5px;color:#2196f3;transform:scaleX(0.925);">Ready to Ship</div>
<div class="t" style="left:279.0px;top:392.4px;font-size:12.5px;color:#222;transform:scaleX(0.925);">3</div>
<svg style="left:319.5px;top:391px;" width="12" height="12" viewBox="0 0 12 12"><rect width="12" height="12" rx="1.5" fill="#13629f"/><path d="M1.6 10 L4.3 6.4 L6.3 8.4 L8 6.9 L10.5 10Z" fill="#fff"/></svg>
<div class="t" style="left:338.0px;top:392.4px;font-size:12.5px;color:#222;transform:scaleX(0.925);">002311</div>
<svg style="left:426px;top:395px;" width="10" height="6" viewBox="0 0 10 6"><path d="M0 0H10L5.0 6Z" fill="#bdbdbd"/></svg>
<div class="t" style="left:448.0px;top:389.4px;font-size:12.5px;color:#111;transform:scaleX(0.903);">Cactus Water Bottle Cruncher Plus...</div>
<svg style="left:701px;top:395px;" width="10" height="6" viewBox="0 0 10 6"><path d="M0 0H10L5.0 6Z" fill="#bdbdbd"/></svg>
<svg style="left:766px;top:395px;" width="10" height="6" viewBox="0 0 10 6"><path d="M0 0H10L5.0 6Z" fill="#bdbdbd"/></svg>
<div class="t" style="left:790.0px;top:392.4px;font-size:12.5px;color:#222;transform:scaleX(0.925);">33</div>
<div class="t" style="left:1092.0px;top:392.4px;font-size:12.5px;color:#222;transform:scaleX(0.925);">$0.00</div>
<div style="left:1151px;top:388px;width:19px;height:18px;background:#13629f;border-radius:2px;"></div>
<div class="t" style="left:1152.5px;top:391.9px;font-size:12.5px;color:#fff;transform:scaleX(1.046);">LA</div>
<div style="left:1175px;top:388px;width:5px;height:4px;background:#13629f;"></div>
<div style="left:1175px;top:395px;width:5px;height:4px;background:#13629f;"></div>
<div style="left:1175px;top:402px;width:5px;height:4px;background:#13629f;"></div>
<div class="t" style="left:1191.5px;top:392.4px;font-size:12.5px;color:#222;transform:scaleX(0.925);">$0.00</div>
<div class="t" style="left:1301.0px;top:392.4px;font-size:12.5px;color:#222;transform:scaleX(0.925);">Tax</div>
<svg style="left:1330px;top:395px;" width="10" height="6" viewBox="0 0 10 6"><path d="M0 0H10L5.0 6Z" fill="#bdbdbd"/></svg>
<div class="t" style="left:1355.0px;top:392.4px;font-size:12.5px;color:#222;transform:scaleX(0.925);">0</div>
<div class="t" style="left:1417.0px;top:390.1px;font-size:15px;color:#13629f;transform:scaleX(0.909);-webkit-text-stroke:0.55px currentColor;">Edit</div>
<svg style="left:1462px;top:386px;" width="22" height="22" viewBox="0 0 22 22"><circle cx="11" cy="11" r="10.8" fill="#fff"/><circle cx="11" cy="11" r="9.7" fill="#c62828"/><path d="M6.3 11.2 L9.6 14.3 L15.8 8" stroke="#fff" stroke-width="2.2" fill="none" stroke-linecap="round" stroke-linejoin="round"/></svg>
<div class="t" style="left:1501.0px;top:392.4px;font-size:12.5px;color:#ef7d00;transform:scaleX(0.925);">Pending PO</div>
<svg style="left:426px;top:423.5px;" width="10" height="6" viewBox="0 0 10 6"><path d="M0 0H10L5.0 6Z" fill="#bdbdbd"/></svg>
<svg style="left:426px;top:452.5px;" width="10" height="6" viewBox="0 0 10 6"><path d="M0 0H10L5.0 6Z" fill="#bdbdbd"/></svg>
<svg style="left:426px;top:481.5px;" width="10" height="6" viewBox="0 0 10 6"><path d="M0 0H10L5.0 6Z" fill="#bdbdbd"/></svg>
<svg style="left:426px;top:511.0px;" width="10" height="6" viewBox="0 0 10 6"><path d="M0 0H10L5.0 6Z" fill="#bdbdbd"/></svg>
<svg style="left:426px;top:541.0px;" width="10" height="6" viewBox="0 0 10 6"><path d="M0 0H10L5.0 6Z" fill="#bdbdbd"/></svg>
<svg style="left:426px;top:571.0px;" width="10" height="6" viewBox="0 0 10 6"><path d="M0 0H10L5.0 6Z" fill="#bdbdbd"/></svg>
<div style="left:85px;top:545px;width:909px;height:1px;background:#ffffff;"></div>
<div style="left:84px;top:546px;width:911px;height:1px;background:#353535;"></div>
<div style="left:85px;top:547px;width:910px;height:34px;background:#636363;"></div>
<div class="t" style="left:102.0px;top:558.2px;font-size:13.5px;color:#c9c9c9;transform:scaleX(0.980);">Sale Order</div>
<div style="left:86px;top:581px;width:149px;height:444px;background:#e6e6e6;"></div>
<svg style="left:93px;top:589px;" width="22" height="22" viewBox="0 0 22 22"><circle cx="11" cy="11" r="9.3" stroke="#13629f" stroke-width="2" fill="none"/><rect x="9.9" y="9" width="2.2" height="7" fill="#13629f"/><circle cx="11" cy="6.6" r="1.3" fill="#13629f"/></svg>
<div class="t" style="left:126.0px;top:593.8px;font-size:13px;color:#13629f;transform:scaleX(0.880);">Info</div>
<svg style="left:94px;top:627px;" width="20" height="22" viewBox="0 0 20 22"><rect x="2.4" y="3.9" width="14.2" height="16" rx="2" stroke="#13629f" stroke-width="2" fill="none"/><path d="M5.6 6.2 L6.9 2.9 A2.9 2.9 0 0 1 11.9 2.9 L13.2 6.2Z" fill="#13629f"/><circle cx="9.4" cy="3.9" r="1.05" fill="#e6e6e6"/><rect x="5.4" y="8" width="8.3" height="1.8" rx="0.9" fill="#13629f"/><rect x="5.4" y="11.1" width="8.3" height="1.8" rx="0.9" fill="#13629f"/><rect x="5.4" y="14.1" width="5.2" height="1.8" rx="0.9" fill="#13629f"/></svg>
<div class="t" style="left:126.0px;top:631.8px;font-size:13px;color:#13629f;transform:scaleX(0.880);">Requirements</div>
<div style="left:86px;top:657px;width:149px;height:38px;background:#ffffff;"></div>
<div style="left:233px;top:657px;width:2px;height:38px;background:#13629f;"></div>
<svg style="left:94px;top:666px;" width="21" height="20" viewBox="0 0 21 20"><rect x="0" y="0" width="3" height="3" fill="#13629f"/><rect x="6" y="0" width="15" height="3" fill="#13629f"/><rect x="0" y="5.5" width="3" height="3" fill="#13629f"/><rect x="6" y="5.5" width="15" height="3" fill="#13629f"/><rect x="0" y="11" width="3" height="3" fill="#13629f"/><rect x="6" y="11" width="15" height="3" fill="#13629f"/><rect x="0" y="16.5" width="3" height="3" fill="#13629f"/><rect x="6" y="16.5" width="15" height="3" fill="#13629f"/></svg>
<div class="t" style="left:126.0px;top:669.8px;font-size:13px;color:#13629f;transform:scaleX(0.880);">Sale Order</div>
<svg style="left:95px;top:704px;" width="19" height="21" viewBox="0 0 19 21"><path d="M2 7V4A2.5 2.5 0 0 1 4.5 1.5H12L16.5 6V18A1.5 1.5 0 0 1 15 19.5H4.5A2.5 2.5 0 0 1 2.2 18" stroke="#13629f" stroke-width="2" fill="none"/><path d="M11.5 1.5V6.5H16.5Z" fill="#13629f"/><text x="-0.5" y="16.2" font-family="Liberation Sans" font-weight="bold" font-size="9.8" fill="#13629f" textLength="14" lengthAdjust="spacingAndGlyphs">SH</text></svg>
<div class="t" style="left:126.0px;top:707.8px;font-size:13px;color:#13629f;transform:scaleX(0.880);">Ship Orders</div>
<svg style="left:95px;top:742px;" width="19" height="21" viewBox="0 0 19 21"><path d="M2 7V4A2.5 2.5 0 0 1 4.5 1.5H12L16.5 6V18A1.5 1.5 0 0 1 15 19.5H4.5A2.5 2.5 0 0 1 2.2 18" stroke="#13629f" stroke-width="2" fill="none"/><path d="M11.5 1.5V6.5H16.5Z" fill="#13629f"/><text x="-0.5" y="16.2" font-family="Liberation Sans" font-weight="bold" font-size="9.8" fill="#13629f" textLength="14" lengthAdjust="spacingAndGlyphs">IN</text></svg>
<div class="t" style="left:126.0px;top:745.8px;font-size:13px;color:#13629f;transform:scaleX(0.880);">Invoices</div>
<svg style="left:95px;top:780px;" width="19" height="21" viewBox="0 0 19 21"><path d="M2 7V4A2.5 2.5 0 0 1 4.5 1.5H12L16.5 6V18A1.5 1.5 0 0 1 15 19.5H4.5A2.5 2.5 0 0 1 2.2 18" stroke="#13629f" stroke-width="2" fill="none"/><path d="M11.5 1.5V6.5H16.5Z" fill="#13629f"/><text x="-0.5" y="16.2" font-family="Liberation Sans" font-weight="bold" font-size="9.8" fill="#13629f" textLength="14" lengthAdjust="spacingAndGlyphs">PO</text></svg>
<div class="t" style="left:126.0px;top:783.8px;font-size:13px;color:#13629f;transform:scaleX(0.880);">Purchase Orders</div>
<svg style="left:93px;top:817px;" width="22" height="22" viewBox="0 0 22 22"><circle cx="11" cy="11" r="9.1" stroke="#13629f" stroke-width="1.9" fill="none"/><path d="M14 8.4 C13.4 7.1 12.3 6.6 11 6.6 C9.4 6.6 8.2 7.5 8.2 8.8 C8.2 10.3 9.7 10.7 11 11.1 C12.6 11.6 14.1 12 14.1 13.5 C14.1 14.8 12.8 15.5 11.1 15.5 C9.6 15.5 8.5 14.8 7.9 13.6" stroke="#13629f" stroke-width="1.8" fill="none" stroke-linecap="butt"/><rect x="10.1" y="4.6" width="1.8" height="2.4" fill="#13629f"/><rect x="10.1" y="15" width="1.8" height="2.4" fill="#13629f"/></svg>
<div class="t" style="left:126.0px;top:821.8px;font-size:13px;color:#13629f;transform:scaleX(0.880);">Cost</div>
<div style="left:85px;top:581px;width:1px;height:444px;background:#f5f5f5;"></div>
<div style="left:84px;top:86px;width:1px;height:939px;background:#333333;"></div>
<div style="left:235px;top:581px;width:759px;height:68px;background:#eeeeee;"></div>
<div class="t" style="left:244.0px;top:593.4px;font-size:12px;color:#13629f;transform:scaleX(0.912);">Customer:</div>
<div style="left:300px;top:587px;width:119px;height:24px;background:#ffffff;border-radius:3px;"></div>
<div class="t" style="left:305.0px;top:592.6px;font-size:13px;color:#444;transform:scaleX(0.880);">Karinatest</div>
<div class="t" style="left:440.0px;top:593.4px;font-size:12px;color:#555;transform:scaleX(0.940);">Contact:</div>
<div style="left:486px;top:587px;width:121px;height:24px;background:#ffffff;border-radius:3px;"></div>
<div class="t" style="left:491.0px;top:592.6px;font-size:13px;color:#a8a8a8;transform:scaleX(0.880);">Contact email</div>
<svg style="left:590px;top:596.0px;" width="10" height="6" viewBox="0 0 10 6"><path d="M0 0H10L5.0 6Z" fill="#c2c2c2"/></svg>
<div class="t" style="left:699.0px;top:593.4px;font-size:12px;color:#555;transform:scaleX(0.890);">Store:</div>
<div style="left:733px;top:587px;width:120px;height:24px;background:#ffffff;border-radius:3px;"></div>
<div class="t" style="left:738.0px;top:592.6px;font-size:13px;color:#444;transform:scaleX(0.880);">Spring Valley</div>
<div class="t" style="left:873.0px;top:593.4px;font-size:12px;color:#555;transform:scaleX(0.880);">SO #:</div>
<div style="left:906px;top:587px;width:94px;height:24px;background:#fafafa;border-radius:3px;"></div>
<div class="t" style="left:913.0px;top:592.6px;font-size:13px;color:#444;transform:scaleX(0.905);">SO-0045237</div>
<div class="t" style="left:244.0px;top:625.4px;font-size:12px;color:#555;transform:scaleX(0.768);">REP:</div>
<div style="left:270px;top:618px;width:115px;height:25px;background:#ffffff;border-radius:3px;"></div>
<div class="t" style="left:275.0px;top:624.1px;font-size:13px;color:#222;transform:scaleX(0.880);">test</div>
<svg style="left:371px;top:627.5px;" width="10" height="6" viewBox="0 0 10 6"><path d="M0 0H10L5.0 6Z" fill="#c2c2c2"/></svg>
<div class="t" style="left:405.0px;top:625.4px;font-size:12px;color:#555;transform:scaleX(0.861);">Terms:</div>
<div style="left:441px;top:618px;width:100px;height:25px;background:#ffffff;border-radius:3px;"></div>
<div class="t" style="left:446.0px;top:624.1px;font-size:13px;color:#222;transform:scaleX(0.880);">net 15</div>
<svg style="left:527px;top:627.5px;" width="10" height="6" viewBox="0 0 10 6"><path d="M0 0H10L5.0 6Z" fill="#c2c2c2"/></svg>
<div style="left:235px;top:649px;width:759px;height:376px;background:#ffffff;"></div>
<div class="t" style="left:245.0px;top:663.9px;font-size:24px;color:#1e1e1e;transform:scaleX(0.948);-webkit-text-stroke:0;">Sale Order</div>
<div style="left:362px;top:661px;width:90px;height:25px;background:#2196f3;border-radius:4px;"></div>
<div class="t" style="left:370.5px;top:666.6px;font-size:16px;color:#ffffff;transform:scaleX(0.966);-webkit-text-stroke:0.55px currentColor;">In Process</div>
<svg style="left:976px;top:660px;" width="20" height="20" viewBox="0 0 20 20"><path d="M6.91 3.38 L7.86 0.74 L12.14 0.74 L13.09 3.38 L13.72 3.55 L14.19 4.02 L16.95 3.52 L19.08 7.22 L17.27 9.36 L17.45 10.00 L17.27 10.64 L19.08 12.78 L16.95 16.48 L14.19 15.98 L13.72 16.45 L13.09 16.62 L12.14 19.26 L7.86 19.26 L6.91 16.62 L6.28 16.45 L5.81 15.98 L3.05 16.48 L0.92 12.78 L2.73 10.64 L2.55 10.00 L2.73 9.36 L0.92 7.22 L3.05 3.52 L5.81 4.02 L6.28 3.55Z M13.30 10.0 A3.3000000000000003 3.3000000000000003 0 1 0 6.70 10.0 A3.3000000000000003 3.3000000000000003 0 1 0 13.30 10.0Z" fill="#13629f" fill-rule="evenodd"/></svg>
<div style="left:244px;top:723px;width:87px;height:23px;background:#f3f3f3;border-radius:3px;"></div>
<svg style="left:316px;top:731.5px;" width="10" height="6" viewBox="0 0 10 6"><path d="M0 0H10L5.0 6Z" fill="#bdbdbd"/></svg>
<div class="t" style="left:244.0px;top:728.3px;font-size:13px;color:#a8a8a8;transform:scaleX(0.880);">us</div>
<div style="left:235px;top:715px;width:9px;height:35px;background:#ffffff;"></div>
<div style="left:342px;top:722px;width:117px;height:25px;background:#ebebeb;"></div>
<div class="t" style="left:357.9px;top:728.9px;font-size:12.5px;color:#13629f;transform:scaleX(0.840);">POPULAR ITEMS</div>
<div style="left:469px;top:722px;width:79px;height:25px;background:#ebebeb;"></div>
<div class="t" style="left:485.2px;top:728.9px;font-size:12.5px;color:#13629f;transform:scaleX(0.840);">ACTIONS</div>
<div style="left:549px;top:722px;width:22px;height:25px;background:#ebebeb;"></div>
<svg style="left:555.5px;top:732.5px;" width="9" height="5" viewBox="0 0 9 5"><path d="M0 0H9L4.5 5Z" fill="#13629f"/></svg>
<div style="left:579px;top:722px;width:134px;height:25px;background:#ebebeb;"></div>
<div class="t" style="left:594.1px;top:728.9px;font-size:12.5px;color:#13629f;transform:scaleX(0.840);">CHECK PRICE COST</div>
<div style="left:721px;top:722px;width:101px;height:25px;background:#c9c9c9;"></div>
<div class="t" style="left:736.0px;top:728.9px;font-size:12.5px;color:#ffffff;transform:scaleX(0.840);">ITEM DETAILS</div>
<div style="left:830px;top:722px;width:75px;height:25px;background:#c9c9c9;"></div>
<div class="t" style="left:854.7px;top:728.9px;font-size:12.5px;color:#ffffff;transform:scaleX(0.840);">VOID</div>
<div style="left:906px;top:722px;width:22px;height:25px;background:#ebebeb;"></div>
<svg style="left:912.5px;top:732.5px;" width="9" height="5" viewBox="0 0 9 5"><path d="M0 0H9L4.5 5Z" fill="#13629f"/></svg>
<div style="left:936px;top:722px;width:27px;height:25px;background:#c9c9c9;"></div>
<div style="left:971px;top:722px;width:27px;height:25px;background:#c9c9c9;"></div>
<svg style="left:936px;top:722px;" width="27" height="25" viewBox="0 0 27 25"><rect x="8" y="3" width="2" height="2" fill="#fff"/><rect x="8" y="15.8" width="2" height="2" fill="#fff"/><rect x="12.3" y="3" width="2" height="2" fill="#fff"/><rect x="12.3" y="15.8" width="2" height="2" fill="#fff"/><rect x="16.6" y="3" width="2" height="2" fill="#fff"/><rect x="16.6" y="15.8" width="2" height="2" fill="#fff"/><rect x="21" y="3" width="2" height="2" fill="#fff"/><rect x="21" y="15.8" width="2" height="2" fill="#fff"/><rect x="8" y="7.3" width="2" height="2" fill="#fff"/><rect x="21" y="7.3" width="2" height="2" fill="#fff"/><rect x="8" y="11.5" width="2" height="2" fill="#fff"/><rect x="21" y="11.5" width="2" height="2" fill="#fff"/><rect x="4" y="11" width="2" height="11" fill="#fff"/><rect x="4" y="20" width="10.8" height="2" fill="#fff"/></svg>
<svg style="left:971px;top:722px;" width="27" height="25" viewBox="0 0 27 25"><rect x="4" y="3" width="2" height="2" fill="#fff"/><rect x="8.2" y="3" width="2" height="2" fill="#fff"/><rect x="12.3" y="3" width="2" height="2" fill="#fff"/><rect x="4" y="7.3" width="2" height="2" fill="#fff"/><rect x="4" y="11.5" width="2" height="2" fill="#fff"/><rect x="8.9" y="7.9" width="13.2" height="13.2" stroke="#fff" stroke-width="2" fill="none"/></svg>
<div style="left:244px;top:755px;width:756px;height:270px;background:#ffffff;"></div>
<div style="left:244px;top:786px;width:738px;height:31px;background:#ecf2f6;"></div>
<div style="left:244px;top:860px;width:738px;height:29px;background:#ecf2f6;"></div>
<div style="left:244px;top:918px;width:738px;height:29px;background:#ecf2f6;"></div>
<div style="left:244px;top:977px;width:738px;height:30px;background:#ecf2f6;"></div>
<div style="left:244px;top:786px;width:738px;height:1px;background:#e6e9ec;"></div>
<div style="left:274px;top:755px;width:1px;height:270px;background:#e6eaee;"></div>
<div style="left:348.7px;top:755px;width:1.0px;height:270px;background:#e6eaee;"></div>
<div style="left:499px;top:755px;width:1px;height:270px;background:#e6eaee;"></div>
<div style="left:578.3px;top:755px;width:1.0px;height:270px;background:#e6eaee;"></div>
<div style="left:649px;top:755px;width:1px;height:270px;background:#e6eaee;"></div>
<div style="left:749px;top:755px;width:1px;height:270px;background:#e6eaee;"></div>
<div style="left:798.7px;top:755px;width:1.0px;height:270px;background:#e6eaee;"></div>
<div style="left:853.8px;top:755px;width:1.0px;height:270px;background:#e6eaee;"></div>
<div style="left:891px;top:755px;width:1px;height:270px;background:#e6eaee;"></div>
<div style="left:244px;top:947px;width:738px;height:1.2999999999999545px;background:#1d63a0;"></div>
<div style="left:244px;top:977px;width:738px;height:1.2999999999999545px;background:#1d63a0;"></div>
<div style="left:244px;top:755px;width:756px;height:1px;background:#b7c8d8;"></div>
<div style="left:244px;top:755px;width:1px;height:270px;background:#b7c8d8;"></div>
<div class="t" style="left:280.0px;top:766.4px;font-size:12.5px;color:#333;transform:scaleX(0.925);">Item</div>
<div class="t" style="left:355.5px;top:766.4px;font-size:12.5px;color:#333;transform:scaleX(0.925);">Description</div>
<div class="t" style="left:505.0px;top:766.4px;font-size:12.5px;color:#333;transform:scaleX(0.925);">QTY</div>
<div class="t" style="left:585.0px;top:766.4px;font-size:12.5px;color:#333;transform:scaleX(0.925);">UOM</div>
<div class="t" style="left:655.0px;top:766.4px;font-size:12.5px;color:#333;transform:scaleX(0.925);">Amount</div>
<div class="t" style="left:755.0px;top:766.4px;font-size:12.5px;color:#333;transform:scaleX(0.925);">Tax</div>
<div class="t" style="left:805.0px;top:766.4px;font-size:12.5px;color:#333;transform:scaleX(0.925);">Settings</div>
<div class="t" style="left:860.0px;top:766.4px;font-size:12.5px;color:#333;transform:scaleX(0.925);">Avail</div>
<div class="t" style="left:897.0px;top:766.4px;font-size:12.5px;color:#333;transform:scaleX(0.925);">Status</div>
<div style="left:987px;top:828px;width:6px;height:107px;background:#f1f1f1;"></div>
<div style="left:251px;top:763px;width:18px;height:18px;border:2px solid #13629f;border-radius:2.5px;"></div>
<div style="left:251px;top:792.5px;width:18px;height:18px;border:2px solid #13629f;border-radius:2.5px;"></div>
<div style="left:251px;top:829.5px;width:18px;height:18px;border:2px solid #13629f;border-radius:2.5px;"></div>
<div style="left:251px;top:865.5px;width:18px;height:18px;border:2px solid #13629f;border-radius:2.5px;"></div>
<div style="left:251px;top:894.5px;width:18px;height:18px;border:2px solid #13629f;border-radius:2.5px;"></div>
<div style="left:251px;top:923.5px;width:18px;height:18px;border:2px solid #13629f;border-radius:2.5px;"></div>
<div style="left:251px;top:953.0px;width:18px;height:18px;border:2px solid #13629f;border-radius:2.5px;"></div>
<div style="left:251px;top:983.0px;width:18px;height:18px;border:2px solid #13629f;border-radius:2.5px;"></div>
<div style="left:251px;top:1013.0px;width:18px;height:18px;border:2px solid #13629f;border-radius:2.5px;"></div>
<svg style="left:280.5px;top:796px;" width="12" height="12" viewBox="0 0 12 12"><rect width="12" height="12" rx="1.5" fill="#13629f"/><path d="M1.6 10 L4.3 6.4 L6.3 8.4 L8 6.9 L10.5 10Z" fill="#fff"/></svg>
<div class="t" style="left:299.0px;top:797.4px;font-size:12.5px;color:#222;transform:scaleX(0.925);">01</div>
<div class="t" style="left:358.0px;top:794.9px;font-size:12.5px;color:#111;transform:scaleX(0.925);">11</div>
<div class="t" style="left:506.0px;top:797.4px;font-size:12.5px;color:#222;transform:scaleX(0.925);">1</div>
<div class="t" style="left:657.0px;top:797.4px;font-size:12.5px;color:#555;transform:scaleX(0.925);">$100.00</div>
<div class="t" style="left:757.0px;top:797.4px;font-size:12.5px;color:#666;transform:scaleX(0.925);">Tax</div>
<div class="t" style="left:818.0px;top:795.0px;font-size:15px;color:#13629f;transform:scaleX(0.909);-webkit-text-stroke:0.55px currentColor;">Edit</div>
<svg style="left:862px;top:791px;" width="22" height="22" viewBox="0 0 22 22"><circle cx="11" cy="11" r="10.8" fill="#fff"/><circle cx="11" cy="11" r="9.7" fill="#4caf50"/><path d="M6.3 11.2 L9.6 14.3 L15.8 8" stroke="#fff" stroke-width="2.2" fill="none" stroke-linecap="round" stroke-linejoin="round"/></svg>
<svg style="left:280.5px;top:831.5px;" width="12" height="12" viewBox="0 0 12 12"><rect width="12" height="12" rx="1.5" fill="#13629f"/><path d="M1.6 10 L4.3 6.4 L6.3 8.4 L8 6.9 L10.5 10Z" fill="#fff"/></svg>
<div class="t" style="left:299.0px;top:832.9px;font-size:12.5px;color:#222;transform:scaleX(0.925);">0</div>
<div class="t" style="left:358.0px;top:822.9px;font-size:12.5px;color:#111;transform:scaleX(0.912);">test display 2</div>
<svg style="left:358px;top:843.5px;" width="11" height="9" viewBox="0 0 11 9"><path d="M1 4.5 L4 7.5 L10 1.2" stroke="#777" stroke-width="1.6" fill="none"/></svg>
<div class="t" style="left:373.0px;top:843.4px;font-size:12.5px;color:#888;transform:scaleX(0.969);">Item Note</div>
<div class="t" style="left:509.0px;top:832.9px;font-size:12.5px;color:#222;transform:scaleX(0.925);">1</div>
<div style="left:570px;top:829px;width:5px;height:4px;background:#13629f;"></div>
<div style="left:570px;top:836px;width:5px;height:4px;background:#13629f;"></div>
<div style="left:570px;top:843px;width:5px;height:4px;background:#13629f;"></div>
<div class="t" style="left:587.0px;top:832.9px;font-size:12.5px;color:#222;transform:scaleX(0.925);">ea</div>
<div class="t" style="left:657.0px;top:832.9px;font-size:12.5px;color:#222;transform:scaleX(0.925);">$100.00</div>
<div class="t" style="left:757.0px;top:832.9px;font-size:12.5px;color:#222;transform:scaleX(0.925);">Tax</div>
<svg style="left:785px;top:835.5px;" width="10" height="6" viewBox="0 0 10 6"><path d="M0 0H10L5.0 6Z" fill="#bdbdbd"/></svg>
<div class="t" style="left:818.0px;top:830.5px;font-size:15px;color:#13629f;transform:scaleX(0.909);-webkit-text-stroke:0.55px currentColor;">Edit</div>
<svg style="left:862px;top:826.5px;" width="22" height="22" viewBox="0 0 22 22"><circle cx="11" cy="11" r="10.8" fill="#fff"/><circle cx="11" cy="11" r="9.7" fill="#ff9800"/><path d="M6.3 11.2 L9.6 14.3 L15.8 8" stroke="#fff" stroke-width="2.2" fill="none" stroke-linecap="round" stroke-linejoin="round"/></svg>
<div class="t" style="left:902.0px;top:832.9px;font-size:12.5px;color:#9c27b0;transform:scaleX(0.925);">PO in process</div>
<svg style="left:335px;top:871.5px;" width="10" height="6" viewBox="0 0 10 6"><path d="M0 0H10L5.0 6Z" fill="#bdbdbd"/></svg>
<svg style="left:335px;top:900.5px;" width="10" height="6" viewBox="0 0 10 6"><path d="M0 0H10L5.0 6Z" fill="#bdbdbd"/></svg>
<svg style="left:335px;top:929.5px;" width="10" height="6" viewBox="0 0 10 6"><path d="M0 0H10L5.0 6Z" fill="#bdbdbd"/></svg>
<svg style="left:335px;top:959.0px;" width="10" height="6" viewBox="0 0 10 6"><path d="M0 0H10L5.0 6Z" fill="#bdbdbd"/></svg>
<svg style="left:335px;top:989.0px;" width="10" height="6" viewBox="0 0 10 6"><path d="M0 0H10L5.0 6Z" fill="#bdbdbd"/></svg>
<svg style="left:335px;top:1019.0px;" width="10" height="6" viewBox="0 0 10 6"><path d="M0 0H10L5.0 6Z" fill="#bdbdbd"/></svg>
<div style="left:889px;top:783px;width:93px;height:35px;background:#ecf2f6;"></div>
<div style="left:885px;top:779px;width:106px;height:43px;border:4px solid #fc5746;box-shadow:inset 1.5px 1.5px 1.5px rgba(0,0,0,0.75),1.5px 1.5px 2px rgba(0,0,0,0.75);"></div>
<div class="t" style="left:902.0px;top:797.4px;font-size:12.5px;color:#4caf50;transform:scaleX(0.924);">Shipped</div>
<div style="left:994px;top:546px;width:1px;height:479px;background:#3c3c3c;"></div>
<div style="left:994px;top:439px;width:911px;height:1px;background:#3c3c3c;"></div>
<div style="left:994px;top:440px;width:911px;height:34px;background:#636363;"></div>
<div class="t" style="left:1011.0px;top:451.7px;font-size:13.5px;color:#f2f2f2;transform:scaleX(0.980);">Sale Order</div>
<div style="left:995px;top:474px;width:150px;height:551px;background:#e6e6e6;"></div>
<svg style="left:1002px;top:482px;" width="22" height="22" viewBox="0 0 22 22"><circle cx="11" cy="11" r="9.3" stroke="#13629f" stroke-width="2" fill="none"/><rect x="9.9" y="9" width="2.2" height="7" fill="#13629f"/><circle cx="11" cy="6.6" r="1.3" fill="#13629f"/></svg>
<div class="t" style="left:1035.0px;top:486.8px;font-size:13px;color:#13629f;transform:scaleX(0.880);">Info</div>
<svg style="left:1003px;top:520px;" width="20" height="22" viewBox="0 0 20 22"><rect x="2.4" y="3.9" width="14.2" height="16" rx="2" stroke="#13629f" stroke-width="2" fill="none"/><path d="M5.6 6.2 L6.9 2.9 A2.9 2.9 0 0 1 11.9 2.9 L13.2 6.2Z" fill="#13629f"/><circle cx="9.4" cy="3.9" r="1.05" fill="#e6e6e6"/><rect x="5.4" y="8" width="8.3" height="1.8" rx="0.9" fill="#13629f"/><rect x="5.4" y="11.1" width="8.3" height="1.8" rx="0.9" fill="#13629f"/><rect x="5.4" y="14.1" width="5.2" height="1.8" rx="0.9" fill="#13629f"/></svg>
<div class="t" style="left:1035.0px;top:524.8px;font-size:13px;color:#13629f;transform:scaleX(0.880);">Requirements</div>
<div style="left:995px;top:550px;width:150px;height:38px;background:#ffffff;"></div>
<div style="left:1143px;top:550px;width:2px;height:38px;background:#13629f;"></div>
<svg style="left:1003px;top:559px;" width="21" height="20" viewBox="0 0 21 20"><rect x="0" y="0" width="3" height="3" fill="#13629f"/><rect x="6" y="0" width="15" height="3" fill="#13629f"/><rect x="0" y="5.5" width="3" height="3" fill="#13629f"/><rect x="6" y="5.5" width="15" height="3" fill="#13629f"/><rect x="0" y="11" width="3" height="3" fill="#13629f"/><rect x="6" y="11" width="15" height="3" fill="#13629f"/><rect x="0" y="16.5" width="3" height="3" fill="#13629f"/><rect x="6" y="16.5" width="15" height="3" fill="#13629f"/></svg>
<div class="t" style="left:1035.0px;top:562.8px;font-size:13px;color:#13629f;transform:scaleX(0.880);">Sale Order</div>
<svg style="left:1004px;top:597px;" width="19" height="21" viewBox="0 0 19 21"><path d="M2 7V4A2.5 2.5 0 0 1 4.5 1.5H12L16.5 6V18A1.5 1.5 0 0 1 15 19.5H4.5A2.5 2.5 0 0 1 2.2 18" stroke="#13629f" stroke-width="2" fill="none"/><path d="M11.5 1.5V6.5H16.5Z" fill="#13629f"/><text x="-0.5" y="16.2" font-family="Liberation Sans" font-weight="bold" font-size="9.8" fill="#13629f" textLength="14" lengthAdjust="spacingAndGlyphs">SH</text></svg>
<div class="t" style="left:1035.0px;top:600.8px;font-size:13px;color:#13629f;transform:scaleX(0.880);">Ship Orders</div>
<svg style="left:1004px;top:635px;" width="19" height="21" viewBox="0 0 19 21"><path d="M2 7V4A2.5 2.5 0 0 1 4.5 1.5H12L16.5 6V18A1.5 1.5 0 0 1 15 19.5H4.5A2.5 2.5 0 0 1 2.2 18" stroke="#13629f" stroke-width="2" fill="none"/><path d="M11.5 1.5V6.5H16.5Z" fill="#13629f"/><text x="-0.5" y="16.2" font-family="Liberation Sans" font-weight="bold" font-size="9.8" fill="#13629f" textLength="14" lengthAdjust="spacingAndGlyphs">IN</text></svg>
<div class="t" style="left:1035.0px;top:638.8px;font-size:13px;color:#13629f;transform:scaleX(0.880);">Invoices</div>
<svg style="left:1002px;top:672px;" width="22" height="22" viewBox="0 0 22 22"><circle cx="11" cy="11" r="9.1" stroke="#13629f" stroke-width="1.9" fill="none"/><path d="M14 8.4 C13.4 7.1 12.3 6.6 11 6.6 C9.4 6.6 8.2 7.5 8.2 8.8 C8.2 10.3 9.7 10.7 11 11.1 C12.6 11.6 14.1 12 14.1 13.5 C14.1 14.8 12.8 15.5 11.1 15.5 C9.6 15.5 8.5 14.8 7.9 13.6" stroke="#13629f" stroke-width="1.8" fill="none" stroke-linecap="butt"/><rect x="10.1" y="4.6" width="1.8" height="2.4" fill="#13629f"/><rect x="10.1" y="15" width="1.8" height="2.4" fill="#13629f"/></svg>
<div class="t" style="left:1035.0px;top:676.8px;font-size:13px;color:#13629f;transform:scaleX(0.880);">Cost</div>
<div style="left:995px;top:474px;width:1px;height:551px;background:#f5f5f5;"></div>
<div style="left:994px;top:439px;width:1px;height:586px;background:#3c3c3c;"></div>
<div style="left:1145px;top:474px;width:760px;height:68px;background:#eeeeee;"></div>
<div class="t" style="left:1153.0px;top:487.4px;font-size:12px;color:#13629f;transform:scaleX(0.912);">Customer:</div>
<div style="left:1209px;top:480px;width:119px;height:25px;background:#ffffff;border-radius:3px;"></div>
<div class="t" style="left:1214.0px;top:486.1px;font-size:13px;color:#444;transform:scaleX(0.880);">Karinatest</div>
<div class="t" style="left:1349.0px;top:487.4px;font-size:12px;color:#555;transform:scaleX(0.940);">Contact:</div>
<div style="left:1396px;top:480px;width:120px;height:25px;background:#ffffff;border-radius:3px;"></div>
<div class="t" style="left:1401.0px;top:486.1px;font-size:13px;color:#a8a8a8;transform:scaleX(0.880);">Contact email</div>
<svg style="left:1498px;top:489.5px;" width="10" height="6" viewBox="0 0 10 6"><path d="M0 0H10L5.0 6Z" fill="#c2c2c2"/></svg>
<div class="t" style="left:1609.0px;top:487.4px;font-size:12px;color:#555;transform:scaleX(0.890);">Store:</div>
<div style="left:1643px;top:480px;width:120px;height:25px;background:#ffffff;border-radius:3px;"></div>
<div class="t" style="left:1648.0px;top:486.1px;font-size:13px;color:#444;transform:scaleX(0.880);">Spring Valley</div>
<div class="t" style="left:1783.0px;top:487.4px;font-size:12px;color:#555;transform:scaleX(0.880);">SO #:</div>
<div style="left:1816px;top:480px;width:94px;height:25px;background:#fafafa;border-radius:3px;"></div>
<div class="t" style="left:1823.0px;top:486.1px;font-size:13px;color:#444;transform:scaleX(0.895);">SO-0046931</div>
<div class="t" style="left:1153.0px;top:518.4px;font-size:12px;color:#555;transform:scaleX(0.768);">REP:</div>
<div style="left:1179px;top:511px;width:115px;height:25px;background:#ffffff;border-radius:3px;"></div>
<div class="t" style="left:1184.0px;top:517.1px;font-size:13px;color:#222;transform:scaleX(0.880);">test 11</div>
<svg style="left:1281px;top:520.5px;" width="10" height="6" viewBox="0 0 10 6"><path d="M0 0H10L5.0 6Z" fill="#c2c2c2"/></svg>
<div class="t" style="left:1314.0px;top:518.4px;font-size:12px;color:#555;transform:scaleX(0.861);">Terms:</div>
<div style="left:1350px;top:511px;width:100px;height:25px;background:#ffffff;border-radius:3px;"></div>
<div class="t" style="left:1355.0px;top:517.1px;font-size:13px;color:#222;transform:scaleX(0.880);">net 15</div>
<svg style="left:1436px;top:520.5px;" width="10" height="6" viewBox="0 0 10 6"><path d="M0 0H10L5.0 6Z" fill="#c2c2c2"/></svg>
<div style="left:1145px;top:542px;width:760px;height:483px;background:#ffffff;"></div>
<div class="t" style="left:1154.0px;top:555.9px;font-size:24px;color:#1e1e1e;transform:scaleX(0.948);-webkit-text-stroke:0;">Sale Order</div>
<div style="left:1271px;top:554px;width:90px;height:25px;background:#2196f3;border-radius:4px;"></div>
<div class="t" style="left:1279.5px;top:559.6px;font-size:16px;color:#ffffff;transform:scaleX(0.966);-webkit-text-stroke:0.55px currentColor;">In Process</div>
<svg style="left:1886px;top:553px;" width="20" height="20" viewBox="0 0 20 20"><path d="M6.91 3.38 L7.86 0.74 L12.14 0.74 L13.09 3.38 L13.72 3.55 L14.19 4.02 L16.95 3.52 L19.08 7.22 L17.27 9.36 L17.45 10.00 L17.27 10.64 L19.08 12.78 L16.95 16.48 L14.19 15.98 L13.72 16.45 L13.09 16.62 L12.14 19.26 L7.86 19.26 L6.91 16.62 L6.28 16.45 L5.81 15.98 L3.05 16.48 L0.92 12.78 L2.73 10.64 L2.55 10.00 L2.73 9.36 L0.92 7.22 L3.05 3.52 L5.81 4.02 L6.28 3.55Z M13.30 10.0 A3.3000000000000003 3.3000000000000003 0 1 0 6.70 10.0 A3.3000000000000003 3.3000000000000003 0 1 0 13.30 10.0Z" fill="#13629f" fill-rule="evenodd"/></svg>
<div style="left:1153px;top:616px;width:88px;height:23px;background:#f3f3f3;border-radius:3px;"></div>
<svg style="left:1225px;top:624.5px;" width="10" height="6" viewBox="0 0 10 6"><path d="M0 0H10L5.0 6Z" fill="#bdbdbd"/></svg>
<div class="t" style="left:1153.0px;top:621.3px;font-size:13px;color:#a8a8a8;transform:scaleX(0.880);">us</div>
<div style="left:1145px;top:610px;width:8px;height:35px;background:#ffffff;"></div>
<div style="left:1252px;top:615px;width:117px;height:25px;background:#ebebeb;"></div>
<div class="t" style="left:1267.9px;top:621.9px;font-size:12.5px;color:#13629f;transform:scaleX(0.840);">POPULAR ITEMS</div>
<div style="left:1379px;top:615px;width:79px;height:25px;background:#ebebeb;"></div>
<div class="t" style="left:1395.2px;top:621.9px;font-size:12.5px;color:#13629f;transform:scaleX(0.840);">ACTIONS</div>
<div style="left:1459px;top:615px;width:22px;height:25px;background:#ebebeb;"></div>
<svg style="left:1465.5px;top:625.5px;" width="9" height="5" viewBox="0 0 9 5"><path d="M0 0H9L4.5 5Z" fill="#13629f"/></svg>
<div style="left:1489px;top:615px;width:134px;height:25px;background:#ebebeb;"></div>
<div class="t" style="left:1504.1px;top:621.9px;font-size:12.5px;color:#13629f;transform:scaleX(0.840);">CHECK PRICE COST</div>
<div style="left:1631px;top:615px;width:101px;height:25px;background:#c9c9c9;"></div>
<div class="t" style="left:1646.0px;top:621.9px;font-size:12.5px;color:#ffffff;transform:scaleX(0.840);">ITEM DETAILS</div>
<div style="left:1740px;top:615px;width:75px;height:25px;background:#c9c9c9;"></div>
<div class="t" style="left:1764.7px;top:621.9px;font-size:12.5px;color:#ffffff;transform:scaleX(0.840);">VOID</div>
<div style="left:1816px;top:615px;width:22px;height:25px;background:#ebebeb;"></div>
<svg style="left:1822.5px;top:625.5px;" width="9" height="5" viewBox="0 0 9 5"><path d="M0 0H9L4.5 5Z" fill="#13629f"/></svg>
<div style="left:1846px;top:615px;width:27px;height:25px;background:#c9c9c9;"></div>
<div style="left:1881px;top:615px;width:27px;height:25px;background:#c9c9c9;"></div>
<svg style="left:1846px;top:615px;" width="27" height="25" viewBox="0 0 27 25"><rect x="8" y="3" width="2" height="2" fill="#fff"/><rect x="8" y="15.8" width="2" height="2" fill="#fff"/><rect x="12.3" y="3" width="2" height="2" fill="#fff"/><rect x="12.3" y="15.8" width="2" height="2" fill="#fff"/><rect x="16.6" y="3" width="2" height="2" fill="#fff"/><rect x="16.6" y="15.8" width="2" height="2" fill="#fff"/><rect x="21" y="3" width="2" height="2" fill="#fff"/><rect x="21" y="15.8" width="2" height="2" fill="#fff"/><rect x="8" y="7.3" width="2" height="2" fill="#fff"/><rect x="21" y="7.3" width="2" height="2" fill="#fff"/><rect x="8" y="11.5" width="2" height="2" fill="#fff"/><rect x="21" y="11.5" width="2" height="2" fill="#fff"/><rect x="4" y="11" width="2" height="11" fill="#fff"/><rect x="4" y="20" width="10.8" height="2" fill="#fff"/></svg>
<svg style="left:1881px;top:615px;" width="27" height="25" viewBox="0 0 27 25"><rect x="4" y="3" width="2" height="2" fill="#fff"/><rect x="8.2" y="3" width="2" height="2" fill="#fff"/><rect x="12.3" y="3" width="2" height="2" fill="#fff"/><rect x="4" y="7.3" width="2" height="2" fill="#fff"/><rect x="4" y="11.5" width="2" height="2" fill="#fff"/><rect x="8.9" y="7.9" width="13.2" height="13.2" stroke="#fff" stroke-width="2" fill="none"/></svg>
<div style="left:1153px;top:648px;width:752px;height:325px;background:#ffffff;"></div>
<div style="left:1153px;top:679px;width:739.5px;height:45px;background:#ecf2f6;"></div>
<div style="left:1153px;top:753px;width:739.5px;height:29px;background:#ecf2f6;"></div>
<div style="left:1153px;top:811px;width:739.5px;height:29px;background:#ecf2f6;"></div>
<div style="left:1153px;top:869px;width:739.5px;height:29px;background:#ecf2f6;"></div>
<div style="left:1153px;top:928px;width:739.5px;height:29px;background:#ecf2f6;"></div>
<div style="left:1153px;top:679px;width:739.5px;height:1px;background:#e6e9ec;"></div>
<div style="left:1182.2px;top:648px;width:1.0px;height:325px;background:#e6eaee;"></div>
<div style="left:1223px;top:648px;width:1px;height:325px;background:#e6eaee;"></div>
<div style="left:1297.5px;top:648px;width:1.0px;height:325px;background:#e6eaee;"></div>
<div style="left:1447.5px;top:648px;width:1.0px;height:325px;background:#e6eaee;"></div>
<div style="left:1528px;top:648px;width:1px;height:325px;background:#e6eaee;"></div>
<div style="left:1628px;top:648px;width:1px;height:325px;background:#e6eaee;"></div>
<div style="left:1678px;top:648px;width:1px;height:325px;background:#e6eaee;"></div>
<div style="left:1733px;top:648px;width:1px;height:325px;background:#e6eaee;"></div>
<div style="left:1770px;top:648px;width:1px;height:325px;background:#e6eaee;"></div>
<div style="left:1153px;top:898px;width:739.5px;height:1.2999999999999545px;background:#1d63a0;"></div>
<div style="left:1153px;top:928px;width:739.5px;height:1.2999999999999545px;background:#1d63a0;"></div>
<div style="left:1153px;top:648px;width:752px;height:1px;background:#b7c8d8;"></div>
<div style="left:1153px;top:648px;width:1px;height:325px;background:#b7c8d8;"></div>
<div class="t" style="left:1189.0px;top:659.4px;font-size:12.5px;color:#333;transform:scaleX(0.925);">#</div>
<div class="t" style="left:1229.0px;top:659.4px;font-size:12.5px;color:#333;transform:scaleX(0.925);">Item</div>
<div class="t" style="left:1304.0px;top:659.4px;font-size:12.5px;color:#333;transform:scaleX(0.925);">Description</div>
<div class="t" style="left:1454.0px;top:659.4px;font-size:12.5px;color:#333;transform:scaleX(0.925);">QTY</div>
<div class="t" style="left:1534.0px;top:659.4px;font-size:12.5px;color:#333;transform:scaleX(0.925);">Amount</div>
<div class="t" style="left:1634.0px;top:659.4px;font-size:12.5px;color:#333;transform:scaleX(0.925);">Tax</div>
<div class="t" style="left:1684.0px;top:659.4px;font-size:12.5px;color:#333;transform:scaleX(0.925);">Settings</div>
<div class="t" style="left:1739.0px;top:659.4px;font-size:12.5px;color:#333;transform:scaleX(0.925);">Avail</div>
<div class="t" style="left:1776.0px;top:659.4px;font-size:12.5px;color:#333;transform:scaleX(0.925);">Status</div>
<div style="left:1153px;top:957px;width:752px;height:16px;background:#ffffff;"></div>
<div style="left:1169px;top:961px;width:706px;height:7px;background:#f2f2f2;"></div>
<div style="left:1153px;top:972px;width:752px;height:1px;background:#b7c8d8;"></div>
<div style="left:1153px;top:957px;width:1px;height:16px;background:#b7c8d8;"></div>
<div style="left:1897px;top:695px;width:6px;height:262px;background:#f4f4f4;"></div>
<svg style="left:1896px;top:684px;" width="8" height="5" viewBox="0 0 8 5"><path d="M0.5 4.5L4 1L7.5 4.5" stroke="#e6e6e6" stroke-width="1" fill="none"/></svg>
<div style="left:1160px;top:656px;width:18px;height:18px;border:2px solid #13629f;border-radius:2.5px;"></div>
<div style="left:1160px;top:692.5px;width:18px;height:18px;border:2px solid #13629f;border-radius:2.5px;"></div>
<div style="left:1160px;top:729.5px;width:18px;height:18px;border:2px solid #13629f;border-radius:2.5px;"></div>
<div style="left:1160px;top:758.5px;width:18px;height:18px;border:2px solid #13629f;border-radius:2.5px;"></div>
<div style="left:1160px;top:787.5px;width:18px;height:18px;border:2px solid #13629f;border-radius:2.5px;"></div>
<div style="left:1160px;top:816.5px;width:18px;height:18px;border:2px solid #13629f;border-radius:2.5px;"></div>
<div style="left:1160px;top:845.5px;width:18px;height:18px;border:2px solid #13629f;border-radius:2.5px;"></div>
<div style="left:1160px;top:874.5px;width:18px;height:18px;border:2px solid #13629f;border-radius:2.5px;"></div>
<div style="left:1160px;top:904.0px;width:18px;height:18px;border:2px solid #13629f;border-radius:2.5px;"></div>
<div style="left:1160px;top:933.5px;width:18px;height:18px;border:2px solid #13629f;border-radius:2.5px;"></div>
<div class="t" style="left:1189.0px;top:698.4px;font-size:12.5px;color:#222;transform:scaleX(0.925);">1</div>
<div class="t" style="left:1231.0px;top:698.4px;font-size:12.5px;color:#222;transform:scaleX(0.925);">gh</div>
<svg style="left:1284px;top:701px;" width="10" height="6" viewBox="0 0 10 6"><path d="M0 0H10L5.0 6Z" fill="#bdbdbd"/></svg>
<div class="t" style="left:1307.0px;top:688.9px;font-size:12.5px;color:#111;transform:scaleX(0.938);">description 2</div>
<svg style="left:1307px;top:707.5px;" width="11" height="9" viewBox="0 0 11 9"><path d="M1 4.5 L4 7.5 L10 1.2" stroke="#777" stroke-width="1.6" fill="none"/></svg>
<div class="t" style="left:1322.0px;top:707.4px;font-size:12.5px;color:#888;transform:scaleX(0.969);">Item Note</div>
<div class="t" style="left:1456.0px;top:698.4px;font-size:12.5px;color:#222;transform:scaleX(0.925);">34</div>
<div class="t" style="left:1536.0px;top:698.4px;font-size:12.5px;color:#222;transform:scaleX(0.925);">$680.00</div>
<div class="t" style="left:1636.0px;top:698.4px;font-size:12.5px;color:#222;transform:scaleX(0.925);">Tax</div>
<svg style="left:1665px;top:701px;" width="10" height="6" viewBox="0 0 10 6"><path d="M0 0H10L5.0 6Z" fill="#bdbdbd"/></svg>
<div class="t" style="left:1696.0px;top:696.0px;font-size:15px;color:#13629f;transform:scaleX(0.909);-webkit-text-stroke:0.55px currentColor;">Edit</div>
<svg style="left:1741px;top:692px;" width="22" height="22" viewBox="0 0 22 22"><circle cx="11" cy="11" r="10.8" fill="#fff"/><circle cx="11" cy="11" r="9.7" fill="#4caf50"/><path d="M6.3 11.2 L9.6 14.3 L15.8 8" stroke="#fff" stroke-width="2.2" fill="none" stroke-linecap="round" stroke-linejoin="round"/></svg>
<div class="t" style="left:1781.0px;top:698.4px;font-size:12.5px;color:#777;transform:scaleX(0.925);">Not Reserved</div>
<div class="t" style="left:1189.0px;top:733.9px;font-size:12.5px;color:#222;transform:scaleX(0.925);">2</div>
<svg style="left:1229.5px;top:732.5px;" width="12" height="12" viewBox="0 0 12 12"><rect width="12" height="12" rx="1.5" fill="#13629f"/><path d="M1.6 10 L4.3 6.4 L6.3 8.4 L8 6.9 L10.5 10Z" fill="#fff"/></svg>
<div class="t" style="left:1248.0px;top:733.9px;font-size:12.5px;color:#222;transform:scaleX(0.925);">0023</div>
<svg style="left:1284px;top:736.5px;" width="10" height="6" viewBox="0 0 10 6"><path d="M0 0H10L5.0 6Z" fill="#bdbdbd"/></svg>
<div class="t" style="left:1307.0px;top:730.4px;font-size:12.5px;color:#111;transform:scaleX(0.891);">Cactus Water Bottle C...</div>
<div class="t" style="left:1456.0px;top:733.9px;font-size:12.5px;color:#222;transform:scaleX(0.925);">1</div>
<div class="t" style="left:1536.0px;top:733.9px;font-size:12.5px;color:#222;transform:scaleX(0.925);">$0.00</div>
<div class="t" style="left:1636.0px;top:733.9px;font-size:12.5px;color:#222;transform:scaleX(0.925);">Tax</div>
<svg style="left:1665px;top:736.5px;" width="10" height="6" viewBox="0 0 10 6"><path d="M0 0H10L5.0 6Z" fill="#bdbdbd"/></svg>
<div class="t" style="left:1696.0px;top:731.5px;font-size:15px;color:#13629f;transform:scaleX(0.909);-webkit-text-stroke:0.55px currentColor;">Edit</div>
<svg style="left:1741px;top:727.5px;" width="22" height="22" viewBox="0 0 22 22"><circle cx="11" cy="11" r="10.8" fill="#fff"/><circle cx="11" cy="11" r="9.7" fill="#ff9800"/><path d="M6.3 11.2 L9.6 14.3 L15.8 8" stroke="#fff" stroke-width="2.2" fill="none" stroke-linecap="round" stroke-linejoin="round"/></svg>
<div class="t" style="left:1781.0px;top:733.9px;font-size:12.5px;color:#777;transform:scaleX(0.925);">Not Reserved</div>
<div class="t" style="left:1189.0px;top:762.9px;font-size:12.5px;color:#222;transform:scaleX(0.925);">3</div>
<svg style="left:1229.5px;top:761.5px;" width="12" height="12" viewBox="0 0 12 12"><rect width="12" height="12" rx="1.5" fill="#13629f"/><path d="M1.6 10 L4.3 6.4 L6.3 8.4 L8 6.9 L10.5 10Z" fill="#fff"/></svg>
<div class="t" style="left:1248.0px;top:762.9px;font-size:12.5px;color:#222;transform:scaleX(0.925);">0023</div>
<svg style="left:1284px;top:765.5px;" width="10" height="6" viewBox="0 0 10 6"><path d="M0 0H10L5.0 6Z" fill="#bdbdbd"/></svg>
<div class="t" style="left:1307.0px;top:759.4px;font-size:12.5px;color:#111;transform:scaleX(0.891);">Cactus Water Bottle C...</div>
<div class="t" style="left:1456.0px;top:762.9px;font-size:12.5px;color:#222;transform:scaleX(0.925);">32</div>
<div class="t" style="left:1536.0px;top:762.9px;font-size:12.5px;color:#222;transform:scaleX(0.925);">$0.00</div>
<div class="t" style="left:1636.0px;top:762.9px;font-size:12.5px;color:#222;transform:scaleX(0.925);">Tax</div>
<svg style="left:1665px;top:765.5px;" width="10" height="6" viewBox="0 0 10 6"><path d="M0 0H10L5.0 6Z" fill="#bdbdbd"/></svg>
<div class="t" style="left:1696.0px;top:760.5px;font-size:15px;color:#13629f;transform:scaleX(0.909);-webkit-text-stroke:0.55px currentColor;">Edit</div>
<svg style="left:1741px;top:756.5px;" width="22" height="22" viewBox="0 0 22 22"><circle cx="11" cy="11" r="10.8" fill="#fff"/><circle cx="11" cy="11" r="9.7" fill="#ff9800"/><path d="M6.3 11.2 L9.6 14.3 L15.8 8" stroke="#fff" stroke-width="2.2" fill="none" stroke-linecap="round" stroke-linejoin="round"/></svg>
<div class="t" style="left:1781.0px;top:762.9px;font-size:12.5px;color:#777;transform:scaleX(0.925);">Backorder</div>
<svg style="left:1284px;top:793.5px;" width="10" height="6" viewBox="0 0 10 6"><path d="M0 0H10L5.0 6Z" fill="#bdbdbd"/></svg>
<svg style="left:1284px;top:822.5px;" width="10" height="6" viewBox="0 0 10 6"><path d="M0 0H10L5.0 6Z" fill="#bdbdbd"/></svg>
<svg style="left:1284px;top:851.5px;" width="10" height="6" viewBox="0 0 10 6"><path d="M0 0H10L5.0 6Z" fill="#bdbdbd"/></svg>
<svg style="left:1284px;top:880.5px;" width="10" height="6" viewBox="0 0 10 6"><path d="M0 0H10L5.0 6Z" fill="#bdbdbd"/></svg>
<svg style="left:1284px;top:910.0px;" width="10" height="6" viewBox="0 0 10 6"><path d="M0 0H10L5.0 6Z" fill="#bdbdbd"/></svg>
<svg style="left:1284px;top:939.5px;" width="10" height="6" viewBox="0 0 10 6"><path d="M0 0H10L5.0 6Z" fill="#bdbdbd"/></svg>
<div style="left:1155px;top:984.5px;width:22px;height:10px;background:#e3e3e3;border-radius:5px;"></div>
<div style="left:1153px;top:983.5px;width:12px;height:12px;border-radius:50%;background:#bdbdbd;"></div>
<div class="t" style="left:1187.5px;top:983.3px;font-size:13px;color:#222;transform:scaleX(0.880);">Layaway</div>
<div style="left:1254px;top:984.5px;width:22px;height:10px;background:#e3e3e3;border-radius:5px;"></div>
<div style="left:1252px;top:983.5px;width:12px;height:12px;border-radius:50%;background:#bdbdbd;"></div>
<div class="t" style="left:1286.5px;top:983.3px;font-size:13px;color:#222;transform:scaleX(0.880);">Is Dropship</div>
<div style="left:1367px;top:984.5px;width:22px;height:10px;background:#ececec;border-radius:5px;"></div>
<div style="left:1365px;top:983.5px;width:12px;height:12px;border-radius:50%;background:#e0e0e0;"></div>
<div class="t" style="left:1399.0px;top:983.3px;font-size:13px;color:#aaa;transform:scaleX(0.880);">Vendor Pickup Order</div>
<div style="left:1530px;top:984.5px;width:22px;height:10px;background:#e3e3e3;border-radius:5px;"></div>
<div style="left:1528px;top:983.5px;width:12px;height:12px;border-radius:50%;background:#bdbdbd;"></div>
<div class="t" style="left:1562.0px;top:983.3px;font-size:13px;color:#222;transform:scaleX(0.880);">Charge CC</div>
<div style="left:1639px;top:983.5px;width:12px;height:12px;border-radius:50%;background:#bdbdbd;"></div>
<div style="left:1645px;top:980px;width:15px;height:20px;background:#ffffff;"></div>
<div style="left:1155px;top:1007.5px;width:22px;height:10px;background:#e3e3e3;border-radius:5px;"></div>
<div style="left:1153px;top:1006.5px;width:12px;height:12px;border-radius:50%;background:#bdbdbd;"></div>
<div class="t" style="left:1187.5px;top:1006.3px;font-size:13px;color:#222;transform:scaleX(0.880);">Require customer acknowledgment</div>
<div style="left:1408px;top:1007.5px;width:22px;height:10px;background:#c5d7f5;border-radius:5px;"></div>
<div style="left:1418px;top:1006.0px;width:13px;height:13px;border-radius:50%;background:#13629f;"></div>
<div class="t" style="left:1438.0px;top:1006.3px;font-size:13px;color:#222;transform:scaleX(0.880);">Show Order Total on PDF/WEB</div>
<div class="t" style="left:1663.0px;top:1009.6px;font-size:11px;color:#777;transform:scaleX(0.880);">TAX</div>
<div style="left:1684px;top:1002px;width:90px;height:23px;background:#f3f3f3;border-radius:3px;"></div>
<svg style="left:1759px;top:1012px;" width="10" height="6" viewBox="0 0 10 6"><path d="M0 0H10L5.0 6Z" fill="#bdbdbd"/></svg>
<div class="t" style="left:1689.0px;top:1008.8px;font-size:13px;color:#333;transform:scaleX(0.843);">Test Tax</div>
<div class="t" style="left:1777.0px;top:1009.4px;font-size:12px;color:#333;transform:scaleX(0.802);">(5 %)</div>
<div class="t" style="left:1828.0px;top:1008.8px;font-size:13px;color:#222;transform:scaleX(0.904);">Discount:</div>
<div class="t" style="left:1881.0px;top:1008.8px;font-size:13px;color:#13629f;transform:scaleX(0.852);">0%</div>
<div style="left:1905px;top:86px;width:15px;height:954px;background:#6a6a6a;"></div>
<div style="left:85px;top:1025px;width:1835px;height:15px;background:#6a6a6a;"></div>
<div style="left:1909px;top:101px;width:7px;height:682px;background:#f4f4f4;"></div>
<svg style="left:1909px;top:91px;" width="8" height="5" viewBox="0 0 8 5"><path d="M0.5 4.5L4 1L7.5 4.5" stroke="#cfcfcf" stroke-width="1.1" fill="none"/></svg>
<svg style="left:1909px;top:1013px;" width="8" height="5" viewBox="0 0 8 5"><path d="M0.5 0.5L4 4L7.5 0.5" stroke="#cfcfcf" stroke-width="1.1" fill="none"/></svg>
<div style="left:100px;top:1029px;width:1543px;height:7px;background:#f4f4f4;"></div>
<svg style="left:90px;top:1029px;" width="5" height="8" viewBox="0 0 5 8"><path d="M4.5 0.5L1 4L4.5 7.5" stroke="#cfcfcf" stroke-width="1.1" fill="none"/></svg>
<svg style="left:1895px;top:1029px;" width="5" height="8" viewBox="0 0 5 8"><path d="M0.5 0.5L4 4L0.5 7.5" stroke="#cfcfcf" stroke-width="1.1" fill="none"/></svg>
</body></html>
